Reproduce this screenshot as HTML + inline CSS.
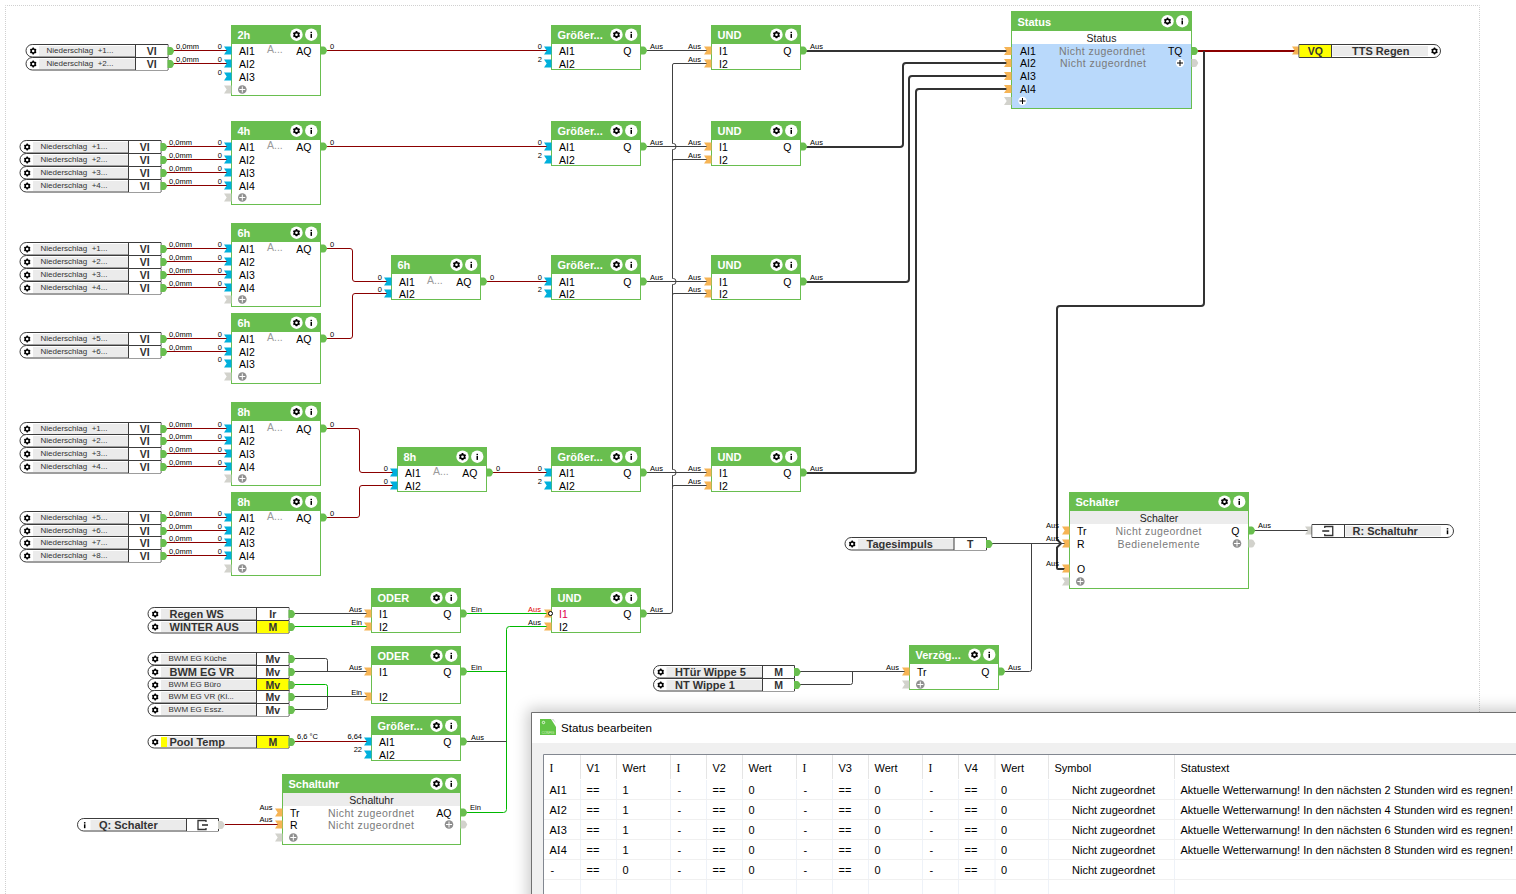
<!DOCTYPE html>
<html><head><meta charset="utf-8"><title>Loxone Config</title>
<style>
html,body{margin:0;padding:0;background:#fff;width:1516px;height:894px;overflow:hidden;position:relative}
#shadow{position:absolute;left:531px;top:712px;width:1100px;height:400px;box-shadow:0 0 14px 3px rgba(0,0,0,0.22)}
svg text{white-space:pre}
</style></head><body>
<svg width="1516" height="894" viewBox="0 0 1516 894" style="position:absolute;left:0;top:0" font-family="Liberation Sans, sans-serif">
<rect x="0" y="0" width="1516" height="894" fill="#fff"/>
<path d="M5.5,894 V5.5 H1479.5 V894" fill="none" stroke="#d0d0d0" stroke-width="1" stroke-dasharray="1,1"/>
<path d="M173,50.5 L227,50.5" fill="none" stroke="#8b0000" stroke-width="1"/>
<text x="176" y="48.5" font-size="7.5" fill="#000">0,0mm</text>
<text x="222" y="48.5" font-size="7.5" fill="#000" text-anchor="end">0</text>
<path d="M173,63.5 L227,63.5" fill="none" stroke="#8b0000" stroke-width="1"/>
<text x="176" y="61.5" font-size="7.5" fill="#000">0,0mm</text>
<text x="222" y="61.5" font-size="7.5" fill="#000" text-anchor="end">0</text>
<text x="222" y="74.5" font-size="7.5" fill="#000" text-anchor="end">0</text>
<path d="M166,146.5 L227,146.5" fill="none" stroke="#8b0000" stroke-width="1"/>
<text x="169" y="144.5" font-size="7.5" fill="#000">0,0mm</text>
<text x="222" y="144.5" font-size="7.5" fill="#000" text-anchor="end">0</text>
<path d="M166,159.5 L227,159.5" fill="none" stroke="#8b0000" stroke-width="1"/>
<text x="169" y="157.5" font-size="7.5" fill="#000">0,0mm</text>
<text x="222" y="157.5" font-size="7.5" fill="#000" text-anchor="end">0</text>
<path d="M166,172.5 L227,172.5" fill="none" stroke="#8b0000" stroke-width="1"/>
<text x="169" y="170.5" font-size="7.5" fill="#000">0,0mm</text>
<text x="222" y="170.5" font-size="7.5" fill="#000" text-anchor="end">0</text>
<path d="M166,185.5 L227,185.5" fill="none" stroke="#8b0000" stroke-width="1"/>
<text x="169" y="183.5" font-size="7.5" fill="#000">0,0mm</text>
<text x="222" y="183.5" font-size="7.5" fill="#000" text-anchor="end">0</text>
<path d="M166,248.5 L227,248.5" fill="none" stroke="#8b0000" stroke-width="1"/>
<text x="169" y="246.5" font-size="7.5" fill="#000">0,0mm</text>
<text x="222" y="246.5" font-size="7.5" fill="#000" text-anchor="end">0</text>
<path d="M166,261.5 L227,261.5" fill="none" stroke="#8b0000" stroke-width="1"/>
<text x="169" y="259.5" font-size="7.5" fill="#000">0,0mm</text>
<text x="222" y="259.5" font-size="7.5" fill="#000" text-anchor="end">0</text>
<path d="M166,274.5 L227,274.5" fill="none" stroke="#8b0000" stroke-width="1"/>
<text x="169" y="272.5" font-size="7.5" fill="#000">0,0mm</text>
<text x="222" y="272.5" font-size="7.5" fill="#000" text-anchor="end">0</text>
<path d="M166,287.5 L227,287.5" fill="none" stroke="#8b0000" stroke-width="1"/>
<text x="169" y="285.5" font-size="7.5" fill="#000">0,0mm</text>
<text x="222" y="285.5" font-size="7.5" fill="#000" text-anchor="end">0</text>
<path d="M166,338.5 L227,338.5" fill="none" stroke="#8b0000" stroke-width="1"/>
<text x="169" y="336.5" font-size="7.5" fill="#000">0,0mm</text>
<text x="222" y="336.5" font-size="7.5" fill="#000" text-anchor="end">0</text>
<path d="M166,351.5 L227,351.5" fill="none" stroke="#8b0000" stroke-width="1"/>
<text x="169" y="349.5" font-size="7.5" fill="#000">0,0mm</text>
<text x="222" y="349.5" font-size="7.5" fill="#000" text-anchor="end">0</text>
<text x="222" y="361.5" font-size="7.5" fill="#000" text-anchor="end">0</text>
<path d="M166,428.5 L227,428.5" fill="none" stroke="#8b0000" stroke-width="1"/>
<text x="169" y="426.5" font-size="7.5" fill="#000">0,0mm</text>
<text x="222" y="426.5" font-size="7.5" fill="#000" text-anchor="end">0</text>
<path d="M166,440.5 L227,440.5" fill="none" stroke="#8b0000" stroke-width="1"/>
<text x="169" y="438.5" font-size="7.5" fill="#000">0,0mm</text>
<text x="222" y="438.5" font-size="7.5" fill="#000" text-anchor="end">0</text>
<path d="M166,453.5 L227,453.5" fill="none" stroke="#8b0000" stroke-width="1"/>
<text x="169" y="451.5" font-size="7.5" fill="#000">0,0mm</text>
<text x="222" y="451.5" font-size="7.5" fill="#000" text-anchor="end">0</text>
<path d="M166,466.5 L227,466.5" fill="none" stroke="#8b0000" stroke-width="1"/>
<text x="169" y="464.5" font-size="7.5" fill="#000">0,0mm</text>
<text x="222" y="464.5" font-size="7.5" fill="#000" text-anchor="end">0</text>
<path d="M166,517.5 L227,517.5" fill="none" stroke="#8b0000" stroke-width="1"/>
<text x="169" y="515.5" font-size="7.5" fill="#000">0,0mm</text>
<text x="222" y="515.5" font-size="7.5" fill="#000" text-anchor="end">0</text>
<path d="M166,530.5 L227,530.5" fill="none" stroke="#8b0000" stroke-width="1"/>
<text x="169" y="528.5" font-size="7.5" fill="#000">0,0mm</text>
<text x="222" y="528.5" font-size="7.5" fill="#000" text-anchor="end">0</text>
<path d="M166,542.5 L227,542.5" fill="none" stroke="#8b0000" stroke-width="1"/>
<text x="169" y="540.5" font-size="7.5" fill="#000">0,0mm</text>
<text x="222" y="540.5" font-size="7.5" fill="#000" text-anchor="end">0</text>
<path d="M166,555.5 L227,555.5" fill="none" stroke="#8b0000" stroke-width="1"/>
<text x="169" y="553.5" font-size="7.5" fill="#000">0,0mm</text>
<text x="222" y="553.5" font-size="7.5" fill="#000" text-anchor="end">0</text>
<path d="M326,50.5 L547,50.5" fill="none" stroke="#8b0000" stroke-width="1"/>
<text x="330" y="48.5" font-size="7.5" fill="#000">0</text>
<text x="542" y="48.5" font-size="7.5" fill="#000" text-anchor="end">0</text>
<text x="542" y="61.5" font-size="7.5" fill="#000" text-anchor="end">2</text>
<path d="M326,146.5 L547,146.5" fill="none" stroke="#8b0000" stroke-width="1"/>
<text x="330" y="144.5" font-size="7.5" fill="#000">0</text>
<text x="542" y="144.5" font-size="7.5" fill="#000" text-anchor="end">0</text>
<text x="542" y="157.5" font-size="7.5" fill="#000" text-anchor="end">2</text>
<path d="M486,281.5 L547,281.5" fill="none" stroke="#8b0000" stroke-width="1"/>
<text x="490" y="279.5" font-size="7.5" fill="#000">0</text>
<text x="542" y="279.5" font-size="7.5" fill="#000" text-anchor="end">0</text>
<text x="542" y="291.5" font-size="7.5" fill="#000" text-anchor="end">2</text>
<path d="M492,472.5 L547,472.5" fill="none" stroke="#8b0000" stroke-width="1"/>
<text x="496" y="470.5" font-size="7.5" fill="#000">0</text>
<text x="542" y="470.5" font-size="7.5" fill="#000" text-anchor="end">0</text>
<text x="542" y="483.5" font-size="7.5" fill="#000" text-anchor="end">2</text>
<path d="M326,248.5 L350,248.5 Q352.5,248.5 352.5,251 L352.5,279 Q352.5,281.5 355,281.5 L387,281.5" fill="none" stroke="#8b0000" stroke-width="1"/>
<path d="M326,338.5 L350,338.5 Q352.5,338.5 352.5,336 L352.5,296 Q352.5,293.5 355,293.5 L387,293.5" fill="none" stroke="#8b0000" stroke-width="1"/>
<text x="330" y="246.5" font-size="7.5" fill="#000">0</text>
<text x="330" y="336.5" font-size="7.5" fill="#000">0</text>
<text x="382" y="279.5" font-size="7.5" fill="#000" text-anchor="end">0</text>
<text x="382" y="291.5" font-size="7.5" fill="#000" text-anchor="end">0</text>
<path d="M326,428.5 L357,428.5 Q359.5,428.5 359.5,431 L359.5,470 Q359.5,472.5 362,472.5 L393,472.5" fill="none" stroke="#8b0000" stroke-width="1"/>
<path d="M326,517.5 L357,517.5 Q359.5,517.5 359.5,515 L359.5,488 Q359.5,485.5 362,485.5 L393,485.5" fill="none" stroke="#8b0000" stroke-width="1"/>
<text x="330" y="426.5" font-size="7.5" fill="#000">0</text>
<text x="330" y="515.5" font-size="7.5" fill="#000">0</text>
<text x="388" y="470.5" font-size="7.5" fill="#000" text-anchor="end">0</text>
<text x="388" y="483.5" font-size="7.5" fill="#000" text-anchor="end">0</text>
<path d="M646,50.5 L707,50.5" fill="none" stroke="#404040" stroke-width="1"/>
<text x="650" y="48.5" font-size="7.5" fill="#000">Aus</text>
<text x="701" y="48.5" font-size="7.5" fill="#000" text-anchor="end">Aus</text>
<text x="701" y="61.5" font-size="7.5" fill="#000" text-anchor="end">Aus</text>
<path d="M646,146.5 L707,146.5" fill="none" stroke="#404040" stroke-width="1"/>
<text x="650" y="144.5" font-size="7.5" fill="#000">Aus</text>
<text x="701" y="144.5" font-size="7.5" fill="#000" text-anchor="end">Aus</text>
<text x="701" y="157.5" font-size="7.5" fill="#000" text-anchor="end">Aus</text>
<path d="M646,281.5 L707,281.5" fill="none" stroke="#404040" stroke-width="1"/>
<text x="650" y="279.5" font-size="7.5" fill="#000">Aus</text>
<text x="701" y="279.5" font-size="7.5" fill="#000" text-anchor="end">Aus</text>
<text x="701" y="291.5" font-size="7.5" fill="#000" text-anchor="end">Aus</text>
<path d="M646,472.5 L707,472.5" fill="none" stroke="#404040" stroke-width="1"/>
<text x="650" y="470.5" font-size="7.5" fill="#000">Aus</text>
<text x="701" y="470.5" font-size="7.5" fill="#000" text-anchor="end">Aus</text>
<text x="701" y="483.5" font-size="7.5" fill="#000" text-anchor="end">Aus</text>
<path d="M646,613.5 L670,613.5 Q672.5,613.5 672.5,611 L672.5,489.5" fill="none" stroke="#404040" stroke-width="1"/>
<path d="M672.5,66 L672.5,143.5 L673.5,143.5 Q676,143.5 676,146.5 Q676,149.5 673.5,149.5 L672.5,149.5 L672.5,278.5 L673.5,278.5 Q676,278.5 676,281.5 Q676,284.5 673.5,284.5 L672.5,284.5 L672.5,469.5 L673.5,469.5 Q676,469.5 676,472.5 Q676,475.5 673.5,475.5 L672.5,475.5 L672.5,489.5" fill="none" stroke="#404040" stroke-width="1"/>
<path d="M672.5,66.5 L672.5,65 Q672.5,63.5 674,63.5 L707,63.5" fill="none" stroke="#404040" stroke-width="1"/>
<path d="M672.5,162.5 L672.5,161 Q672.5,159.5 674,159.5 L707,159.5" fill="none" stroke="#404040" stroke-width="1"/>
<path d="M672.5,296.5 L672.5,295 Q672.5,293.5 674,293.5 L707,293.5" fill="none" stroke="#404040" stroke-width="1"/>
<path d="M672.5,488.5 L672.5,487 Q672.5,485.5 674,485.5 L707,485.5" fill="none" stroke="#404040" stroke-width="1"/>
<text x="650" y="611.5" font-size="7.5" fill="#000">Aus</text>
<path d="M806,51 L1007,51" fill="none" stroke="#333" stroke-width="2"/>
<path d="M806,147 L900,147 Q903,147 903,144 L903,66 Q903,63 906,63 L1007,63" fill="none" stroke="#333" stroke-width="2"/>
<path d="M806,282 L906,282 Q909,282 909,279 L909,79 Q909,76 912,76 L1007,76" fill="none" stroke="#333" stroke-width="2"/>
<path d="M806,473 L913,473 Q916,473 916,470 L916,92 Q916,89 919,89 L1007,89" fill="none" stroke="#333" stroke-width="2"/>
<text x="810" y="48.5" font-size="7.5" fill="#000">Aus</text>
<text x="810" y="144.5" font-size="7.5" fill="#000">Aus</text>
<text x="810" y="279.5" font-size="7.5" fill="#000">Aus</text>
<text x="810" y="470.5" font-size="7.5" fill="#000">Aus</text>
<path d="M1196,51 L1296,51" fill="none" stroke="#8b0000" stroke-width="2"/>
<path d="M1204,51 L1204,303 Q1204,306 1201,306 L1060,306 Q1057,306 1057,309 L1057,540" fill="none" stroke="#333" stroke-width="2"/>
<path d="M1057,539.5 L1061,543.5 L1057,547.5" fill="none" stroke="#333" stroke-width="2"/>
<path d="M1057,547 L1057,568 Q1057,569 1058,569 L1066,569" fill="none" stroke="#333" stroke-width="2"/>
<path d="M991,543.5 L1066,543.5" fill="none" stroke="#404040" stroke-width="1"/>
<path d="M1031.5,543.5 L1031.5,669.5 Q1031.5,671.5 1029.5,671.5 L1004,671.5" fill="none" stroke="#404040" stroke-width="1"/>
<text x="1008" y="669.5" font-size="7.5" fill="#000">Aus</text>
<text x="1059" y="528" font-size="7.5" fill="#000" text-anchor="end">Aus</text>
<text x="1059" y="541" font-size="7.5" fill="#000" text-anchor="end">Aus</text>
<text x="1059" y="566" font-size="7.5" fill="#000" text-anchor="end">Aus</text>
<path d="M1254,530.5 L1308,530.5" fill="none" stroke="#404040" stroke-width="1"/>
<text x="1258" y="528" font-size="7.5" fill="#000">Aus</text>
<path d="M800,671.5 L905,671.5" fill="none" stroke="#404040" stroke-width="1"/>
<path d="M800,684.5 L850.5,684.5 Q852.5,684.5 852.5,682.5 L852.5,671.5" fill="none" stroke="#404040" stroke-width="1"/>
<text x="899" y="669.5" font-size="7.5" fill="#000" text-anchor="end">Aus</text>
<path d="M294,613.5 L367,613.5" fill="none" stroke="#404040" stroke-width="1"/>
<path d="M294,626.5 L367,626.5" fill="none" stroke="#00b800" stroke-width="1"/>
<text x="362" y="611.5" font-size="7.5" fill="#000" text-anchor="end">Aus</text>
<text x="362" y="624.5" font-size="7.5" fill="#000" text-anchor="end">Ein</text>
<path d="M466,613.5 L547,613.5" fill="none" stroke="#00b800" stroke-width="1"/>
<text x="471" y="611.5" font-size="7.5" fill="#000">Ein</text>
<text x="541" y="611.5" font-size="7.5" fill="#e00000" text-anchor="end">Aus</text>
<text x="541" y="624.5" font-size="7.5" fill="#000" text-anchor="end">Aus</text>
<path d="M547,626.5 L509.5,626.5 Q506.5,626.5 506.5,629.5 L506.5,809.5 Q506.5,812.5 503.5,812.5 L466,812.5" fill="none" stroke="#00b800" stroke-width="1"/>
<path d="M466,671.5 L506.5,671.5" fill="none" stroke="#00b800" stroke-width="1"/>
<text x="471" y="669.5" font-size="7.5" fill="#000">Ein</text>
<path d="M466,741.5 L506.5,741.5" fill="none" stroke="#404040" stroke-width="1"/>
<text x="471" y="739.5" font-size="7.5" fill="#000">Aus</text>
<text x="470" y="810" font-size="7.5" fill="#000">Ein</text>
<path d="M294,658.5 L325.5,658.5 Q327.5,658.5 327.5,660.5 L327.5,671.5" fill="none" stroke="#404040" stroke-width="1"/>
<path d="M294,671.5 L367,671.5" fill="none" stroke="#404040" stroke-width="1"/>
<path d="M294,684.5 L325.5,684.5 Q327.5,684.5 327.5,686.5 L327.5,696.5" fill="none" stroke="#00b800" stroke-width="1"/>
<path d="M294,696.5 L367,696.5" fill="none" stroke="#404040" stroke-width="1"/>
<path d="M294,709.5 L325.5,709.5 Q327.5,709.5 327.5,707.5 L327.5,696.5" fill="none" stroke="#404040" stroke-width="1"/>
<text x="362" y="669.5" font-size="7.5" fill="#000" text-anchor="end">Aus</text>
<text x="362" y="694.5" font-size="7.5" fill="#000" text-anchor="end">Ein</text>
<path d="M294,741.5 L367,741.5" fill="none" stroke="#8b0000" stroke-width="1"/>
<text x="297" y="739" font-size="7.5" fill="#000">6,6 °C</text>
<text x="362" y="739" font-size="7.5" fill="#000" text-anchor="end">6,64</text>
<text x="362" y="752" font-size="7.5" fill="#000" text-anchor="end">22</text>
<path d="M225,824.5 L278,824.5" fill="none" stroke="#8b0000" stroke-width="1"/>
<text x="272.5" y="810" font-size="7.5" fill="#000" text-anchor="end">Aus</text>
<text x="272.5" y="822" font-size="7.5" fill="#000" text-anchor="end">Aus</text>
<rect x="231" y="25" width="90" height="71" fill="#69be4f"/>
<rect x="232" y="44" width="88" height="51" fill="#fff"/>
<text x="237.5" y="39.3" font-size="11" fill="#fff" font-weight="bold">2h</text>
<circle cx="296.5" cy="34.7" r="6.2" fill="#fff"/>
<circle cx="311.25" cy="34.7" r="6.2" fill="#fff"/>
<g transform="translate(296.5,34.7) scale(1.0)"><circle r="2.8" fill="#000"/><rect x="-0.9" y="-3.6" width="1.8" height="7.2" rx="0.4" fill="#000" transform="rotate(0)"/><rect x="-0.9" y="-3.6" width="1.8" height="7.2" rx="0.4" fill="#000" transform="rotate(60)"/><rect x="-0.9" y="-3.6" width="1.8" height="7.2" rx="0.4" fill="#000" transform="rotate(120)"/><circle r="1.3" fill="#fff"/></g>
<g transform="translate(311.25,34.7) scale(1.0)"><rect x="-0.75" y="-2.9" width="1.5" height="1.4" fill="#000"/><rect x="-0.75" y="-0.7" width="1.5" height="3.9" fill="#000"/></g>
<path d="M224,46.5 H231.5 V54.5 H224 L226.7,50.5 Z" fill="#00b0dc"/>
<text x="239" y="54.7" font-size="10.5" fill="#000">AI1</text>
<path d="M224,59.5 H231.5 V67.5 H224 L226.7,63.5 Z" fill="#00b0dc"/>
<text x="239" y="67.7" font-size="10.5" fill="#000">AI2</text>
<path d="M224,72.5 H231.5 V80.5 H224 L226.7,76.5 Z" fill="#00b0dc"/>
<text x="239" y="80.7" font-size="10.5" fill="#000">AI3</text>
<path d="M224,85.5 H231.5 V93.5 H224 L226.7,89.5 Z" fill="#d2d2cc"/>
<circle cx="242.3" cy="89.5" r="4.3" fill="#8f8f8f"/><rect x="239.3" y="89" width="6" height="1" fill="#fff"/><rect x="241.8" y="86.5" width="1" height="6" fill="#fff"/>
<text x="267" y="53" font-size="10.5" fill="#9a9a9a">A...</text>
<text x="311.5" y="54.7" font-size="10.5" fill="#000" text-anchor="end">AQ</text>
<path d="M320.5,46.5 H324 Q325.5,46.5 326.5,49 L327.3,50.5 L326.5,52 Q325.5,54.5 324,54.5 H320.5 Z" fill="#69be4f"/>
<rect x="231" y="121" width="90" height="84" fill="#69be4f"/>
<rect x="232" y="140" width="88" height="64" fill="#fff"/>
<text x="237.5" y="135.3" font-size="11" fill="#fff" font-weight="bold">4h</text>
<circle cx="296.5" cy="130.7" r="6.2" fill="#fff"/>
<circle cx="311.25" cy="130.7" r="6.2" fill="#fff"/>
<g transform="translate(296.5,130.7) scale(1.0)"><circle r="2.8" fill="#000"/><rect x="-0.9" y="-3.6" width="1.8" height="7.2" rx="0.4" fill="#000" transform="rotate(0)"/><rect x="-0.9" y="-3.6" width="1.8" height="7.2" rx="0.4" fill="#000" transform="rotate(60)"/><rect x="-0.9" y="-3.6" width="1.8" height="7.2" rx="0.4" fill="#000" transform="rotate(120)"/><circle r="1.3" fill="#fff"/></g>
<g transform="translate(311.25,130.7) scale(1.0)"><rect x="-0.75" y="-2.9" width="1.5" height="1.4" fill="#000"/><rect x="-0.75" y="-0.7" width="1.5" height="3.9" fill="#000"/></g>
<path d="M224,142.5 H231.5 V150.5 H224 L226.7,146.5 Z" fill="#00b0dc"/>
<text x="239" y="150.7" font-size="10.5" fill="#000">AI1</text>
<path d="M224,155.5 H231.5 V163.5 H224 L226.7,159.5 Z" fill="#00b0dc"/>
<text x="239" y="163.7" font-size="10.5" fill="#000">AI2</text>
<path d="M224,168.5 H231.5 V176.5 H224 L226.7,172.5 Z" fill="#00b0dc"/>
<text x="239" y="176.7" font-size="10.5" fill="#000">AI3</text>
<path d="M224,181.5 H231.5 V189.5 H224 L226.7,185.5 Z" fill="#00b0dc"/>
<text x="239" y="189.7" font-size="10.5" fill="#000">AI4</text>
<path d="M224,193.5 H231.5 V201.5 H224 L226.7,197.5 Z" fill="#d2d2cc"/>
<circle cx="242.3" cy="197.5" r="4.3" fill="#8f8f8f"/><rect x="239.3" y="197" width="6" height="1" fill="#fff"/><rect x="241.8" y="194.5" width="1" height="6" fill="#fff"/>
<text x="267" y="149" font-size="10.5" fill="#9a9a9a">A...</text>
<text x="311.5" y="150.7" font-size="10.5" fill="#000" text-anchor="end">AQ</text>
<path d="M320.5,142.5 H324 Q325.5,142.5 326.5,145 L327.3,146.5 L326.5,148 Q325.5,150.5 324,150.5 H320.5 Z" fill="#69be4f"/>
<rect x="231" y="223" width="90" height="84" fill="#69be4f"/>
<rect x="232" y="242" width="88" height="64" fill="#fff"/>
<text x="237.5" y="237.3" font-size="11" fill="#fff" font-weight="bold">6h</text>
<circle cx="296.5" cy="232.7" r="6.2" fill="#fff"/>
<circle cx="311.25" cy="232.7" r="6.2" fill="#fff"/>
<g transform="translate(296.5,232.7) scale(1.0)"><circle r="2.8" fill="#000"/><rect x="-0.9" y="-3.6" width="1.8" height="7.2" rx="0.4" fill="#000" transform="rotate(0)"/><rect x="-0.9" y="-3.6" width="1.8" height="7.2" rx="0.4" fill="#000" transform="rotate(60)"/><rect x="-0.9" y="-3.6" width="1.8" height="7.2" rx="0.4" fill="#000" transform="rotate(120)"/><circle r="1.3" fill="#fff"/></g>
<g transform="translate(311.25,232.7) scale(1.0)"><rect x="-0.75" y="-2.9" width="1.5" height="1.4" fill="#000"/><rect x="-0.75" y="-0.7" width="1.5" height="3.9" fill="#000"/></g>
<path d="M224,244.5 H231.5 V252.5 H224 L226.7,248.5 Z" fill="#00b0dc"/>
<text x="239" y="252.7" font-size="10.5" fill="#000">AI1</text>
<path d="M224,257.5 H231.5 V265.5 H224 L226.7,261.5 Z" fill="#00b0dc"/>
<text x="239" y="265.7" font-size="10.5" fill="#000">AI2</text>
<path d="M224,270.5 H231.5 V278.5 H224 L226.7,274.5 Z" fill="#00b0dc"/>
<text x="239" y="278.7" font-size="10.5" fill="#000">AI3</text>
<path d="M224,283.5 H231.5 V291.5 H224 L226.7,287.5 Z" fill="#00b0dc"/>
<text x="239" y="291.7" font-size="10.5" fill="#000">AI4</text>
<path d="M224,295.5 H231.5 V303.5 H224 L226.7,299.5 Z" fill="#d2d2cc"/>
<circle cx="242.3" cy="299.5" r="4.3" fill="#8f8f8f"/><rect x="239.3" y="299" width="6" height="1" fill="#fff"/><rect x="241.8" y="296.5" width="1" height="6" fill="#fff"/>
<text x="267" y="251" font-size="10.5" fill="#9a9a9a">A...</text>
<text x="311.5" y="252.7" font-size="10.5" fill="#000" text-anchor="end">AQ</text>
<path d="M320.5,244.5 H324 Q325.5,244.5 326.5,247 L327.3,248.5 L326.5,250 Q325.5,252.5 324,252.5 H320.5 Z" fill="#69be4f"/>
<rect x="231" y="313" width="90" height="71" fill="#69be4f"/>
<rect x="232" y="332" width="88" height="51" fill="#fff"/>
<text x="237.5" y="327.3" font-size="11" fill="#fff" font-weight="bold">6h</text>
<circle cx="296.5" cy="322.7" r="6.2" fill="#fff"/>
<circle cx="311.25" cy="322.7" r="6.2" fill="#fff"/>
<g transform="translate(296.5,322.7) scale(1.0)"><circle r="2.8" fill="#000"/><rect x="-0.9" y="-3.6" width="1.8" height="7.2" rx="0.4" fill="#000" transform="rotate(0)"/><rect x="-0.9" y="-3.6" width="1.8" height="7.2" rx="0.4" fill="#000" transform="rotate(60)"/><rect x="-0.9" y="-3.6" width="1.8" height="7.2" rx="0.4" fill="#000" transform="rotate(120)"/><circle r="1.3" fill="#fff"/></g>
<g transform="translate(311.25,322.7) scale(1.0)"><rect x="-0.75" y="-2.9" width="1.5" height="1.4" fill="#000"/><rect x="-0.75" y="-0.7" width="1.5" height="3.9" fill="#000"/></g>
<path d="M224,334.5 H231.5 V342.5 H224 L226.7,338.5 Z" fill="#00b0dc"/>
<text x="239" y="342.7" font-size="10.5" fill="#000">AI1</text>
<path d="M224,347.5 H231.5 V355.5 H224 L226.7,351.5 Z" fill="#00b0dc"/>
<text x="239" y="355.7" font-size="10.5" fill="#000">AI2</text>
<path d="M224,359.5 H231.5 V367.5 H224 L226.7,363.5 Z" fill="#00b0dc"/>
<text x="239" y="367.7" font-size="10.5" fill="#000">AI3</text>
<path d="M224,372.5 H231.5 V380.5 H224 L226.7,376.5 Z" fill="#d2d2cc"/>
<circle cx="242.3" cy="376.5" r="4.3" fill="#8f8f8f"/><rect x="239.3" y="376" width="6" height="1" fill="#fff"/><rect x="241.8" y="373.5" width="1" height="6" fill="#fff"/>
<text x="267" y="341" font-size="10.5" fill="#9a9a9a">A...</text>
<text x="311.5" y="342.7" font-size="10.5" fill="#000" text-anchor="end">AQ</text>
<path d="M320.5,334.5 H324 Q325.5,334.5 326.5,337 L327.3,338.5 L326.5,340 Q325.5,342.5 324,342.5 H320.5 Z" fill="#69be4f"/>
<rect x="231" y="402" width="90" height="84" fill="#69be4f"/>
<rect x="232" y="421" width="88" height="64" fill="#fff"/>
<text x="237.5" y="416.3" font-size="11" fill="#fff" font-weight="bold">8h</text>
<circle cx="296.5" cy="411.7" r="6.2" fill="#fff"/>
<circle cx="311.25" cy="411.7" r="6.2" fill="#fff"/>
<g transform="translate(296.5,411.7) scale(1.0)"><circle r="2.8" fill="#000"/><rect x="-0.9" y="-3.6" width="1.8" height="7.2" rx="0.4" fill="#000" transform="rotate(0)"/><rect x="-0.9" y="-3.6" width="1.8" height="7.2" rx="0.4" fill="#000" transform="rotate(60)"/><rect x="-0.9" y="-3.6" width="1.8" height="7.2" rx="0.4" fill="#000" transform="rotate(120)"/><circle r="1.3" fill="#fff"/></g>
<g transform="translate(311.25,411.7) scale(1.0)"><rect x="-0.75" y="-2.9" width="1.5" height="1.4" fill="#000"/><rect x="-0.75" y="-0.7" width="1.5" height="3.9" fill="#000"/></g>
<path d="M224,424.5 H231.5 V432.5 H224 L226.7,428.5 Z" fill="#00b0dc"/>
<text x="239" y="432.7" font-size="10.5" fill="#000">AI1</text>
<path d="M224,436.5 H231.5 V444.5 H224 L226.7,440.5 Z" fill="#00b0dc"/>
<text x="239" y="444.7" font-size="10.5" fill="#000">AI2</text>
<path d="M224,449.5 H231.5 V457.5 H224 L226.7,453.5 Z" fill="#00b0dc"/>
<text x="239" y="457.7" font-size="10.5" fill="#000">AI3</text>
<path d="M224,462.5 H231.5 V470.5 H224 L226.7,466.5 Z" fill="#00b0dc"/>
<text x="239" y="470.7" font-size="10.5" fill="#000">AI4</text>
<path d="M224,474.5 H231.5 V482.5 H224 L226.7,478.5 Z" fill="#d2d2cc"/>
<circle cx="242.3" cy="478.5" r="4.3" fill="#8f8f8f"/><rect x="239.3" y="478" width="6" height="1" fill="#fff"/><rect x="241.8" y="475.5" width="1" height="6" fill="#fff"/>
<text x="267" y="431" font-size="10.5" fill="#9a9a9a">A...</text>
<text x="311.5" y="432.7" font-size="10.5" fill="#000" text-anchor="end">AQ</text>
<path d="M320.5,424.5 H324 Q325.5,424.5 326.5,427 L327.3,428.5 L326.5,430 Q325.5,432.5 324,432.5 H320.5 Z" fill="#69be4f"/>
<rect x="231" y="492" width="90" height="84" fill="#69be4f"/>
<rect x="232" y="511" width="88" height="64" fill="#fff"/>
<text x="237.5" y="506.3" font-size="11" fill="#fff" font-weight="bold">8h</text>
<circle cx="296.5" cy="501.7" r="6.2" fill="#fff"/>
<circle cx="311.25" cy="501.7" r="6.2" fill="#fff"/>
<g transform="translate(296.5,501.7) scale(1.0)"><circle r="2.8" fill="#000"/><rect x="-0.9" y="-3.6" width="1.8" height="7.2" rx="0.4" fill="#000" transform="rotate(0)"/><rect x="-0.9" y="-3.6" width="1.8" height="7.2" rx="0.4" fill="#000" transform="rotate(60)"/><rect x="-0.9" y="-3.6" width="1.8" height="7.2" rx="0.4" fill="#000" transform="rotate(120)"/><circle r="1.3" fill="#fff"/></g>
<g transform="translate(311.25,501.7) scale(1.0)"><rect x="-0.75" y="-2.9" width="1.5" height="1.4" fill="#000"/><rect x="-0.75" y="-0.7" width="1.5" height="3.9" fill="#000"/></g>
<path d="M224,513.5 H231.5 V521.5 H224 L226.7,517.5 Z" fill="#00b0dc"/>
<text x="239" y="521.7" font-size="10.5" fill="#000">AI1</text>
<path d="M224,526.5 H231.5 V534.5 H224 L226.7,530.5 Z" fill="#00b0dc"/>
<text x="239" y="534.7" font-size="10.5" fill="#000">AI2</text>
<path d="M224,538.5 H231.5 V546.5 H224 L226.7,542.5 Z" fill="#00b0dc"/>
<text x="239" y="546.7" font-size="10.5" fill="#000">AI3</text>
<path d="M224,551.5 H231.5 V559.5 H224 L226.7,555.5 Z" fill="#00b0dc"/>
<text x="239" y="559.7" font-size="10.5" fill="#000">AI4</text>
<path d="M224,564.5 H231.5 V572.5 H224 L226.7,568.5 Z" fill="#d2d2cc"/>
<circle cx="242.3" cy="568.5" r="4.3" fill="#8f8f8f"/><rect x="239.3" y="568" width="6" height="1" fill="#fff"/><rect x="241.8" y="565.5" width="1" height="6" fill="#fff"/>
<text x="267" y="520" font-size="10.5" fill="#9a9a9a">A...</text>
<text x="311.5" y="521.7" font-size="10.5" fill="#000" text-anchor="end">AQ</text>
<path d="M320.5,513.5 H324 Q325.5,513.5 326.5,516 L327.3,517.5 L326.5,519 Q325.5,521.5 324,521.5 H320.5 Z" fill="#69be4f"/>
<rect x="391" y="255" width="90" height="45" fill="#69be4f"/>
<rect x="392" y="274" width="88" height="25" fill="#fff"/>
<text x="397.5" y="269.3" font-size="11" fill="#fff" font-weight="bold">6h</text>
<circle cx="456.5" cy="264.7" r="6.2" fill="#fff"/>
<circle cx="471.25" cy="264.7" r="6.2" fill="#fff"/>
<g transform="translate(456.5,264.7) scale(1.0)"><circle r="2.8" fill="#000"/><rect x="-0.9" y="-3.6" width="1.8" height="7.2" rx="0.4" fill="#000" transform="rotate(0)"/><rect x="-0.9" y="-3.6" width="1.8" height="7.2" rx="0.4" fill="#000" transform="rotate(60)"/><rect x="-0.9" y="-3.6" width="1.8" height="7.2" rx="0.4" fill="#000" transform="rotate(120)"/><circle r="1.3" fill="#fff"/></g>
<g transform="translate(471.25,264.7) scale(1.0)"><rect x="-0.75" y="-2.9" width="1.5" height="1.4" fill="#000"/><rect x="-0.75" y="-0.7" width="1.5" height="3.9" fill="#000"/></g>
<path d="M384,277.5 H391.5 V285.5 H384 L386.7,281.5 Z" fill="#00b0dc"/>
<text x="399" y="285.7" font-size="10.5" fill="#000">AI1</text>
<path d="M384,289.5 H391.5 V297.5 H384 L386.7,293.5 Z" fill="#00b0dc"/>
<text x="399" y="297.7" font-size="10.5" fill="#000">AI2</text>
<text x="427" y="284" font-size="10.5" fill="#9a9a9a">A...</text>
<text x="471.5" y="285.7" font-size="10.5" fill="#000" text-anchor="end">AQ</text>
<path d="M480.5,277.5 H484 Q485.5,277.5 486.5,280 L487.3,281.5 L486.5,283 Q485.5,285.5 484,285.5 H480.5 Z" fill="#69be4f"/>
<rect x="397" y="447" width="90" height="45" fill="#69be4f"/>
<rect x="398" y="466" width="88" height="25" fill="#fff"/>
<text x="403.5" y="461.3" font-size="11" fill="#fff" font-weight="bold">8h</text>
<circle cx="462.5" cy="456.7" r="6.2" fill="#fff"/>
<circle cx="477.25" cy="456.7" r="6.2" fill="#fff"/>
<g transform="translate(462.5,456.7) scale(1.0)"><circle r="2.8" fill="#000"/><rect x="-0.9" y="-3.6" width="1.8" height="7.2" rx="0.4" fill="#000" transform="rotate(0)"/><rect x="-0.9" y="-3.6" width="1.8" height="7.2" rx="0.4" fill="#000" transform="rotate(60)"/><rect x="-0.9" y="-3.6" width="1.8" height="7.2" rx="0.4" fill="#000" transform="rotate(120)"/><circle r="1.3" fill="#fff"/></g>
<g transform="translate(477.25,456.7) scale(1.0)"><rect x="-0.75" y="-2.9" width="1.5" height="1.4" fill="#000"/><rect x="-0.75" y="-0.7" width="1.5" height="3.9" fill="#000"/></g>
<path d="M390,468.5 H397.5 V476.5 H390 L392.7,472.5 Z" fill="#00b0dc"/>
<text x="405" y="476.7" font-size="10.5" fill="#000">AI1</text>
<path d="M390,481.5 H397.5 V489.5 H390 L392.7,485.5 Z" fill="#00b0dc"/>
<text x="405" y="489.7" font-size="10.5" fill="#000">AI2</text>
<text x="433" y="475" font-size="10.5" fill="#9a9a9a">A...</text>
<text x="477.5" y="476.7" font-size="10.5" fill="#000" text-anchor="end">AQ</text>
<path d="M486.5,468.5 H490 Q491.5,468.5 492.5,471 L493.3,472.5 L492.5,474 Q491.5,476.5 490,476.5 H486.5 Z" fill="#69be4f"/>
<rect x="551" y="25" width="90" height="45" fill="#69be4f"/>
<rect x="552" y="44" width="88" height="25" fill="#fff"/>
<text x="557.5" y="39.3" font-size="11" fill="#fff" font-weight="bold">Größer...</text>
<circle cx="616.5" cy="34.7" r="6.2" fill="#fff"/>
<circle cx="631.25" cy="34.7" r="6.2" fill="#fff"/>
<g transform="translate(616.5,34.7) scale(1.0)"><circle r="2.8" fill="#000"/><rect x="-0.9" y="-3.6" width="1.8" height="7.2" rx="0.4" fill="#000" transform="rotate(0)"/><rect x="-0.9" y="-3.6" width="1.8" height="7.2" rx="0.4" fill="#000" transform="rotate(60)"/><rect x="-0.9" y="-3.6" width="1.8" height="7.2" rx="0.4" fill="#000" transform="rotate(120)"/><circle r="1.3" fill="#fff"/></g>
<g transform="translate(631.25,34.7) scale(1.0)"><rect x="-0.75" y="-2.9" width="1.5" height="1.4" fill="#000"/><rect x="-0.75" y="-0.7" width="1.5" height="3.9" fill="#000"/></g>
<path d="M544,46.5 H551.5 V54.5 H544 L546.7,50.5 Z" fill="#00b0dc"/>
<text x="559" y="54.7" font-size="10.5" fill="#000">AI1</text>
<path d="M544,59.5 H551.5 V67.5 H544 L546.7,63.5 Z" fill="#00b0dc"/>
<text x="559" y="67.7" font-size="10.5" fill="#000">AI2</text>
<text x="631.5" y="54.7" font-size="10.5" fill="#000" text-anchor="end">Q</text>
<path d="M640.5,46.5 H644 Q645.5,46.5 646.5,49 L647.3,50.5 L646.5,52 Q645.5,54.5 644,54.5 H640.5 Z" fill="#69be4f"/>
<rect x="551" y="121" width="90" height="45" fill="#69be4f"/>
<rect x="552" y="140" width="88" height="25" fill="#fff"/>
<text x="557.5" y="135.3" font-size="11" fill="#fff" font-weight="bold">Größer...</text>
<circle cx="616.5" cy="130.7" r="6.2" fill="#fff"/>
<circle cx="631.25" cy="130.7" r="6.2" fill="#fff"/>
<g transform="translate(616.5,130.7) scale(1.0)"><circle r="2.8" fill="#000"/><rect x="-0.9" y="-3.6" width="1.8" height="7.2" rx="0.4" fill="#000" transform="rotate(0)"/><rect x="-0.9" y="-3.6" width="1.8" height="7.2" rx="0.4" fill="#000" transform="rotate(60)"/><rect x="-0.9" y="-3.6" width="1.8" height="7.2" rx="0.4" fill="#000" transform="rotate(120)"/><circle r="1.3" fill="#fff"/></g>
<g transform="translate(631.25,130.7) scale(1.0)"><rect x="-0.75" y="-2.9" width="1.5" height="1.4" fill="#000"/><rect x="-0.75" y="-0.7" width="1.5" height="3.9" fill="#000"/></g>
<path d="M544,142.5 H551.5 V150.5 H544 L546.7,146.5 Z" fill="#00b0dc"/>
<text x="559" y="150.7" font-size="10.5" fill="#000">AI1</text>
<path d="M544,155.5 H551.5 V163.5 H544 L546.7,159.5 Z" fill="#00b0dc"/>
<text x="559" y="163.7" font-size="10.5" fill="#000">AI2</text>
<text x="631.5" y="150.7" font-size="10.5" fill="#000" text-anchor="end">Q</text>
<path d="M640.5,142.5 H644 Q645.5,142.5 646.5,145 L647.3,146.5 L646.5,148 Q645.5,150.5 644,150.5 H640.5 Z" fill="#69be4f"/>
<rect x="551" y="255" width="90" height="45" fill="#69be4f"/>
<rect x="552" y="274" width="88" height="25" fill="#fff"/>
<text x="557.5" y="269.3" font-size="11" fill="#fff" font-weight="bold">Größer...</text>
<circle cx="616.5" cy="264.7" r="6.2" fill="#fff"/>
<circle cx="631.25" cy="264.7" r="6.2" fill="#fff"/>
<g transform="translate(616.5,264.7) scale(1.0)"><circle r="2.8" fill="#000"/><rect x="-0.9" y="-3.6" width="1.8" height="7.2" rx="0.4" fill="#000" transform="rotate(0)"/><rect x="-0.9" y="-3.6" width="1.8" height="7.2" rx="0.4" fill="#000" transform="rotate(60)"/><rect x="-0.9" y="-3.6" width="1.8" height="7.2" rx="0.4" fill="#000" transform="rotate(120)"/><circle r="1.3" fill="#fff"/></g>
<g transform="translate(631.25,264.7) scale(1.0)"><rect x="-0.75" y="-2.9" width="1.5" height="1.4" fill="#000"/><rect x="-0.75" y="-0.7" width="1.5" height="3.9" fill="#000"/></g>
<path d="M544,277.5 H551.5 V285.5 H544 L546.7,281.5 Z" fill="#00b0dc"/>
<text x="559" y="285.7" font-size="10.5" fill="#000">AI1</text>
<path d="M544,289.5 H551.5 V297.5 H544 L546.7,293.5 Z" fill="#00b0dc"/>
<text x="559" y="297.7" font-size="10.5" fill="#000">AI2</text>
<text x="631.5" y="285.7" font-size="10.5" fill="#000" text-anchor="end">Q</text>
<path d="M640.5,277.5 H644 Q645.5,277.5 646.5,280 L647.3,281.5 L646.5,283 Q645.5,285.5 644,285.5 H640.5 Z" fill="#69be4f"/>
<rect x="551" y="447" width="90" height="45" fill="#69be4f"/>
<rect x="552" y="466" width="88" height="25" fill="#fff"/>
<text x="557.5" y="461.3" font-size="11" fill="#fff" font-weight="bold">Größer...</text>
<circle cx="616.5" cy="456.7" r="6.2" fill="#fff"/>
<circle cx="631.25" cy="456.7" r="6.2" fill="#fff"/>
<g transform="translate(616.5,456.7) scale(1.0)"><circle r="2.8" fill="#000"/><rect x="-0.9" y="-3.6" width="1.8" height="7.2" rx="0.4" fill="#000" transform="rotate(0)"/><rect x="-0.9" y="-3.6" width="1.8" height="7.2" rx="0.4" fill="#000" transform="rotate(60)"/><rect x="-0.9" y="-3.6" width="1.8" height="7.2" rx="0.4" fill="#000" transform="rotate(120)"/><circle r="1.3" fill="#fff"/></g>
<g transform="translate(631.25,456.7) scale(1.0)"><rect x="-0.75" y="-2.9" width="1.5" height="1.4" fill="#000"/><rect x="-0.75" y="-0.7" width="1.5" height="3.9" fill="#000"/></g>
<path d="M544,468.5 H551.5 V476.5 H544 L546.7,472.5 Z" fill="#00b0dc"/>
<text x="559" y="476.7" font-size="10.5" fill="#000">AI1</text>
<path d="M544,481.5 H551.5 V489.5 H544 L546.7,485.5 Z" fill="#00b0dc"/>
<text x="559" y="489.7" font-size="10.5" fill="#000">AI2</text>
<text x="631.5" y="476.7" font-size="10.5" fill="#000" text-anchor="end">Q</text>
<path d="M640.5,468.5 H644 Q645.5,468.5 646.5,471 L647.3,472.5 L646.5,474 Q645.5,476.5 644,476.5 H640.5 Z" fill="#69be4f"/>
<rect x="711" y="25" width="90" height="45" fill="#69be4f"/>
<rect x="712" y="44" width="88" height="25" fill="#fff"/>
<text x="717.5" y="39.3" font-size="11" fill="#fff" font-weight="bold">UND</text>
<circle cx="776.5" cy="34.7" r="6.2" fill="#fff"/>
<circle cx="791.25" cy="34.7" r="6.2" fill="#fff"/>
<g transform="translate(776.5,34.7) scale(1.0)"><circle r="2.8" fill="#000"/><rect x="-0.9" y="-3.6" width="1.8" height="7.2" rx="0.4" fill="#000" transform="rotate(0)"/><rect x="-0.9" y="-3.6" width="1.8" height="7.2" rx="0.4" fill="#000" transform="rotate(60)"/><rect x="-0.9" y="-3.6" width="1.8" height="7.2" rx="0.4" fill="#000" transform="rotate(120)"/><circle r="1.3" fill="#fff"/></g>
<g transform="translate(791.25,34.7) scale(1.0)"><rect x="-0.75" y="-2.9" width="1.5" height="1.4" fill="#000"/><rect x="-0.75" y="-0.7" width="1.5" height="3.9" fill="#000"/></g>
<path d="M704,46.5 H711.5 V54.5 H704 L706.7,50.5 Z" fill="#f6b455"/>
<text x="719" y="54.7" font-size="10.5" fill="#000">I1</text>
<path d="M704,59.5 H711.5 V67.5 H704 L706.7,63.5 Z" fill="#f6b455"/>
<text x="719" y="67.7" font-size="10.5" fill="#000">I2</text>
<text x="791.5" y="54.7" font-size="10.5" fill="#000" text-anchor="end">Q</text>
<path d="M800.5,46.5 H804 Q805.5,46.5 806.5,49 L807.3,50.5 L806.5,52 Q805.5,54.5 804,54.5 H800.5 Z" fill="#69be4f"/>
<rect x="711" y="121" width="90" height="45" fill="#69be4f"/>
<rect x="712" y="140" width="88" height="25" fill="#fff"/>
<text x="717.5" y="135.3" font-size="11" fill="#fff" font-weight="bold">UND</text>
<circle cx="776.5" cy="130.7" r="6.2" fill="#fff"/>
<circle cx="791.25" cy="130.7" r="6.2" fill="#fff"/>
<g transform="translate(776.5,130.7) scale(1.0)"><circle r="2.8" fill="#000"/><rect x="-0.9" y="-3.6" width="1.8" height="7.2" rx="0.4" fill="#000" transform="rotate(0)"/><rect x="-0.9" y="-3.6" width="1.8" height="7.2" rx="0.4" fill="#000" transform="rotate(60)"/><rect x="-0.9" y="-3.6" width="1.8" height="7.2" rx="0.4" fill="#000" transform="rotate(120)"/><circle r="1.3" fill="#fff"/></g>
<g transform="translate(791.25,130.7) scale(1.0)"><rect x="-0.75" y="-2.9" width="1.5" height="1.4" fill="#000"/><rect x="-0.75" y="-0.7" width="1.5" height="3.9" fill="#000"/></g>
<path d="M704,142.5 H711.5 V150.5 H704 L706.7,146.5 Z" fill="#f6b455"/>
<text x="719" y="150.7" font-size="10.5" fill="#000">I1</text>
<path d="M704,155.5 H711.5 V163.5 H704 L706.7,159.5 Z" fill="#f6b455"/>
<text x="719" y="163.7" font-size="10.5" fill="#000">I2</text>
<text x="791.5" y="150.7" font-size="10.5" fill="#000" text-anchor="end">Q</text>
<path d="M800.5,142.5 H804 Q805.5,142.5 806.5,145 L807.3,146.5 L806.5,148 Q805.5,150.5 804,150.5 H800.5 Z" fill="#69be4f"/>
<rect x="711" y="255" width="90" height="45" fill="#69be4f"/>
<rect x="712" y="274" width="88" height="25" fill="#fff"/>
<text x="717.5" y="269.3" font-size="11" fill="#fff" font-weight="bold">UND</text>
<circle cx="776.5" cy="264.7" r="6.2" fill="#fff"/>
<circle cx="791.25" cy="264.7" r="6.2" fill="#fff"/>
<g transform="translate(776.5,264.7) scale(1.0)"><circle r="2.8" fill="#000"/><rect x="-0.9" y="-3.6" width="1.8" height="7.2" rx="0.4" fill="#000" transform="rotate(0)"/><rect x="-0.9" y="-3.6" width="1.8" height="7.2" rx="0.4" fill="#000" transform="rotate(60)"/><rect x="-0.9" y="-3.6" width="1.8" height="7.2" rx="0.4" fill="#000" transform="rotate(120)"/><circle r="1.3" fill="#fff"/></g>
<g transform="translate(791.25,264.7) scale(1.0)"><rect x="-0.75" y="-2.9" width="1.5" height="1.4" fill="#000"/><rect x="-0.75" y="-0.7" width="1.5" height="3.9" fill="#000"/></g>
<path d="M704,277.5 H711.5 V285.5 H704 L706.7,281.5 Z" fill="#f6b455"/>
<text x="719" y="285.7" font-size="10.5" fill="#000">I1</text>
<path d="M704,289.5 H711.5 V297.5 H704 L706.7,293.5 Z" fill="#f6b455"/>
<text x="719" y="297.7" font-size="10.5" fill="#000">I2</text>
<text x="791.5" y="285.7" font-size="10.5" fill="#000" text-anchor="end">Q</text>
<path d="M800.5,277.5 H804 Q805.5,277.5 806.5,280 L807.3,281.5 L806.5,283 Q805.5,285.5 804,285.5 H800.5 Z" fill="#69be4f"/>
<rect x="711" y="447" width="90" height="45" fill="#69be4f"/>
<rect x="712" y="466" width="88" height="25" fill="#fff"/>
<text x="717.5" y="461.3" font-size="11" fill="#fff" font-weight="bold">UND</text>
<circle cx="776.5" cy="456.7" r="6.2" fill="#fff"/>
<circle cx="791.25" cy="456.7" r="6.2" fill="#fff"/>
<g transform="translate(776.5,456.7) scale(1.0)"><circle r="2.8" fill="#000"/><rect x="-0.9" y="-3.6" width="1.8" height="7.2" rx="0.4" fill="#000" transform="rotate(0)"/><rect x="-0.9" y="-3.6" width="1.8" height="7.2" rx="0.4" fill="#000" transform="rotate(60)"/><rect x="-0.9" y="-3.6" width="1.8" height="7.2" rx="0.4" fill="#000" transform="rotate(120)"/><circle r="1.3" fill="#fff"/></g>
<g transform="translate(791.25,456.7) scale(1.0)"><rect x="-0.75" y="-2.9" width="1.5" height="1.4" fill="#000"/><rect x="-0.75" y="-0.7" width="1.5" height="3.9" fill="#000"/></g>
<path d="M704,468.5 H711.5 V476.5 H704 L706.7,472.5 Z" fill="#f6b455"/>
<text x="719" y="476.7" font-size="10.5" fill="#000">I1</text>
<path d="M704,481.5 H711.5 V489.5 H704 L706.7,485.5 Z" fill="#f6b455"/>
<text x="719" y="489.7" font-size="10.5" fill="#000">I2</text>
<text x="791.5" y="476.7" font-size="10.5" fill="#000" text-anchor="end">Q</text>
<path d="M800.5,468.5 H804 Q805.5,468.5 806.5,471 L807.3,472.5 L806.5,474 Q805.5,476.5 804,476.5 H800.5 Z" fill="#69be4f"/>
<rect x="371" y="588" width="90" height="45" fill="#69be4f"/>
<rect x="372" y="607" width="88" height="25" fill="#fff"/>
<text x="377.5" y="602.3" font-size="11" fill="#fff" font-weight="bold">ODER</text>
<circle cx="436.5" cy="597.7" r="6.2" fill="#fff"/>
<circle cx="451.25" cy="597.7" r="6.2" fill="#fff"/>
<g transform="translate(436.5,597.7) scale(1.0)"><circle r="2.8" fill="#000"/><rect x="-0.9" y="-3.6" width="1.8" height="7.2" rx="0.4" fill="#000" transform="rotate(0)"/><rect x="-0.9" y="-3.6" width="1.8" height="7.2" rx="0.4" fill="#000" transform="rotate(60)"/><rect x="-0.9" y="-3.6" width="1.8" height="7.2" rx="0.4" fill="#000" transform="rotate(120)"/><circle r="1.3" fill="#fff"/></g>
<g transform="translate(451.25,597.7) scale(1.0)"><rect x="-0.75" y="-2.9" width="1.5" height="1.4" fill="#000"/><rect x="-0.75" y="-0.7" width="1.5" height="3.9" fill="#000"/></g>
<path d="M364,609.5 H371.5 V617.5 H364 L366.7,613.5 Z" fill="#f6b455"/>
<text x="379" y="617.7" font-size="10.5" fill="#000">I1</text>
<path d="M364,622.5 H371.5 V630.5 H364 L366.7,626.5 Z" fill="#f6b455"/>
<text x="379" y="630.7" font-size="10.5" fill="#000">I2</text>
<text x="451.5" y="617.7" font-size="10.5" fill="#000" text-anchor="end">Q</text>
<path d="M460.5,609.5 H464 Q465.5,609.5 466.5,612 L467.3,613.5 L466.5,615 Q465.5,617.5 464,617.5 H460.5 Z" fill="#69be4f"/>
<rect x="371" y="646" width="90" height="58" fill="#69be4f"/>
<rect x="372" y="665" width="88" height="38" fill="#fff"/>
<text x="377.5" y="660.3" font-size="11" fill="#fff" font-weight="bold">ODER</text>
<circle cx="436.5" cy="655.7" r="6.2" fill="#fff"/>
<circle cx="451.25" cy="655.7" r="6.2" fill="#fff"/>
<g transform="translate(436.5,655.7) scale(1.0)"><circle r="2.8" fill="#000"/><rect x="-0.9" y="-3.6" width="1.8" height="7.2" rx="0.4" fill="#000" transform="rotate(0)"/><rect x="-0.9" y="-3.6" width="1.8" height="7.2" rx="0.4" fill="#000" transform="rotate(60)"/><rect x="-0.9" y="-3.6" width="1.8" height="7.2" rx="0.4" fill="#000" transform="rotate(120)"/><circle r="1.3" fill="#fff"/></g>
<g transform="translate(451.25,655.7) scale(1.0)"><rect x="-0.75" y="-2.9" width="1.5" height="1.4" fill="#000"/><rect x="-0.75" y="-0.7" width="1.5" height="3.9" fill="#000"/></g>
<path d="M364,667.5 H371.5 V675.5 H364 L366.7,671.5 Z" fill="#f6b455"/>
<text x="379" y="675.7" font-size="10.5" fill="#000">I1</text>
<path d="M364,692.5 H371.5 V700.5 H364 L366.7,696.5 Z" fill="#f6b455"/>
<text x="379" y="700.7" font-size="10.5" fill="#000">I2</text>
<text x="451.5" y="675.7" font-size="10.5" fill="#000" text-anchor="end">Q</text>
<path d="M460.5,667.5 H464 Q465.5,667.5 466.5,670 L467.3,671.5 L466.5,673 Q465.5,675.5 464,675.5 H460.5 Z" fill="#69be4f"/>
<rect x="371" y="716" width="90" height="45" fill="#69be4f"/>
<rect x="372" y="735" width="88" height="25" fill="#fff"/>
<text x="377.5" y="730.3" font-size="11" fill="#fff" font-weight="bold">Größer...</text>
<circle cx="436.5" cy="725.7" r="6.2" fill="#fff"/>
<circle cx="451.25" cy="725.7" r="6.2" fill="#fff"/>
<g transform="translate(436.5,725.7) scale(1.0)"><circle r="2.8" fill="#000"/><rect x="-0.9" y="-3.6" width="1.8" height="7.2" rx="0.4" fill="#000" transform="rotate(0)"/><rect x="-0.9" y="-3.6" width="1.8" height="7.2" rx="0.4" fill="#000" transform="rotate(60)"/><rect x="-0.9" y="-3.6" width="1.8" height="7.2" rx="0.4" fill="#000" transform="rotate(120)"/><circle r="1.3" fill="#fff"/></g>
<g transform="translate(451.25,725.7) scale(1.0)"><rect x="-0.75" y="-2.9" width="1.5" height="1.4" fill="#000"/><rect x="-0.75" y="-0.7" width="1.5" height="3.9" fill="#000"/></g>
<path d="M364,737.5 H371.5 V745.5 H364 L366.7,741.5 Z" fill="#00b0dc"/>
<text x="379" y="745.7" font-size="10.5" fill="#000">AI1</text>
<path d="M364,750.5 H371.5 V758.5 H364 L366.7,754.5 Z" fill="#00b0dc"/>
<text x="379" y="758.7" font-size="10.5" fill="#000">AI2</text>
<text x="451.5" y="745.7" font-size="10.5" fill="#000" text-anchor="end">Q</text>
<path d="M460.5,737.5 H464 Q465.5,737.5 466.5,740 L467.3,741.5 L466.5,743 Q465.5,745.5 464,745.5 H460.5 Z" fill="#69be4f"/>
<rect x="551" y="588" width="90" height="45" fill="#69be4f"/>
<rect x="552" y="607" width="88" height="25" fill="#fff"/>
<text x="557.5" y="602.3" font-size="11" fill="#fff" font-weight="bold">UND</text>
<circle cx="616.5" cy="597.7" r="6.2" fill="#fff"/>
<circle cx="631.25" cy="597.7" r="6.2" fill="#fff"/>
<g transform="translate(616.5,597.7) scale(1.0)"><circle r="2.8" fill="#000"/><rect x="-0.9" y="-3.6" width="1.8" height="7.2" rx="0.4" fill="#000" transform="rotate(0)"/><rect x="-0.9" y="-3.6" width="1.8" height="7.2" rx="0.4" fill="#000" transform="rotate(60)"/><rect x="-0.9" y="-3.6" width="1.8" height="7.2" rx="0.4" fill="#000" transform="rotate(120)"/><circle r="1.3" fill="#fff"/></g>
<g transform="translate(631.25,597.7) scale(1.0)"><rect x="-0.75" y="-2.9" width="1.5" height="1.4" fill="#000"/><rect x="-0.75" y="-0.7" width="1.5" height="3.9" fill="#000"/></g>
<path d="M544,609.5 H551.5 V617.5 H544 L546.7,613.5 Z" fill="#f6b455"/>
<path d="M544,622.5 H551.5 V630.5 H544 L546.7,626.5 Z" fill="#f6b455"/>
<text x="559" y="630.7" font-size="10.5" fill="#000">I2</text>
<text x="631.5" y="617.7" font-size="10.5" fill="#000" text-anchor="end">Q</text>
<path d="M640.5,609.5 H644 Q645.5,609.5 646.5,612 L647.3,613.5 L646.5,615 Q645.5,617.5 644,617.5 H640.5 Z" fill="#69be4f"/>
<text x="559" y="617.7" font-size="10.5" fill="#e0004a">I1</text>
<circle cx="550.5" cy="613.5" r="2" fill="#fff" stroke="#000" stroke-width="1"/>
<rect x="909" y="645" width="90" height="45" fill="#69be4f"/>
<rect x="910" y="664" width="88" height="25" fill="#fff"/>
<text x="915.5" y="659.3" font-size="11" fill="#fff" font-weight="bold">Verzög...</text>
<circle cx="974.5" cy="654.7" r="6.2" fill="#fff"/>
<circle cx="989.25" cy="654.7" r="6.2" fill="#fff"/>
<g transform="translate(974.5,654.7) scale(1.0)"><circle r="2.8" fill="#000"/><rect x="-0.9" y="-3.6" width="1.8" height="7.2" rx="0.4" fill="#000" transform="rotate(0)"/><rect x="-0.9" y="-3.6" width="1.8" height="7.2" rx="0.4" fill="#000" transform="rotate(60)"/><rect x="-0.9" y="-3.6" width="1.8" height="7.2" rx="0.4" fill="#000" transform="rotate(120)"/><circle r="1.3" fill="#fff"/></g>
<g transform="translate(989.25,654.7) scale(1.0)"><rect x="-0.75" y="-2.9" width="1.5" height="1.4" fill="#000"/><rect x="-0.75" y="-0.7" width="1.5" height="3.9" fill="#000"/></g>
<path d="M902,667.5 H909.5 V675.5 H902 L904.7,671.5 Z" fill="#f6b455"/>
<text x="917" y="675.7" font-size="10.5" fill="#000">Tr</text>
<path d="M902,680.5 H909.5 V688.5 H902 L904.7,684.5 Z" fill="#d2d2cc"/>
<circle cx="920.3" cy="684.5" r="4.3" fill="#8f8f8f"/><rect x="917.3" y="684" width="6" height="1" fill="#fff"/><rect x="919.8" y="681.5" width="1" height="6" fill="#fff"/>
<text x="989.5" y="675.7" font-size="10.5" fill="#000" text-anchor="end">Q</text>
<path d="M998.5,667.5 H1002 Q1003.5,667.5 1004.5,670 L1005.3,671.5 L1004.5,673 Q1003.5,675.5 1002,675.5 H998.5 Z" fill="#69be4f"/>
<rect x="1011" y="11" width="181" height="98" fill="#69be4f"/>
<rect x="1012" y="31" width="179" height="13" fill="#fff"/>
<rect x="1012" y="44" width="179" height="64" fill="#b9d9fb"/>
<text x="1017.5" y="26" font-size="11" fill="#fff" font-weight="bold">Status</text>
<circle cx="1167.5" cy="21.2" r="6.2" fill="#fff"/>
<circle cx="1182.25" cy="21.2" r="6.2" fill="#fff"/>
<g transform="translate(1167.5,21.2) scale(1.0)"><circle r="2.8" fill="#000"/><rect x="-0.9" y="-3.6" width="1.8" height="7.2" rx="0.4" fill="#000" transform="rotate(0)"/><rect x="-0.9" y="-3.6" width="1.8" height="7.2" rx="0.4" fill="#000" transform="rotate(60)"/><rect x="-0.9" y="-3.6" width="1.8" height="7.2" rx="0.4" fill="#000" transform="rotate(120)"/><circle r="1.3" fill="#fff"/></g>
<g transform="translate(1182.25,21.2) scale(1.0)"><rect x="-0.75" y="-2.9" width="1.5" height="1.4" fill="#000"/><rect x="-0.75" y="-0.7" width="1.5" height="3.9" fill="#000"/></g>
<text x="1101.5" y="41.5" font-size="10.5" fill="#222" text-anchor="middle">Status</text>
<path d="M1004,47 H1011.5 V55 H1004 L1006.7,51 Z" fill="#f6b455"/>
<text x="1020" y="55" font-size="10.5" fill="#000">AI1</text>
<path d="M1004,59 H1011.5 V67 H1004 L1006.7,63 Z" fill="#f6b455"/>
<text x="1020" y="67" font-size="10.5" fill="#000">AI2</text>
<path d="M1004,72 H1011.5 V80 H1004 L1006.7,76 Z" fill="#f6b455"/>
<text x="1020" y="80" font-size="10.5" fill="#000">AI3</text>
<path d="M1004,85 H1011.5 V93 H1004 L1006.7,89 Z" fill="#f6b455"/>
<text x="1020" y="93" font-size="10.5" fill="#000">AI4</text>
<path d="M1004,97 H1011.5 V105 H1004 L1006.7,101 Z" fill="#d2d2cc"/>
<circle cx="1022.5" cy="101" r="4.2" fill="#fff"/><rect x="1019.5" y="100.5" width="6" height="1" fill="#000"/><rect x="1022" y="98" width="1" height="6" fill="#000"/>
<text x="1059" y="55" font-size="10.5" fill="#7a7a7a" textLength="86" lengthAdjust="spacing">Nicht zugeordnet</text>
<text x="1060" y="67" font-size="10.5" fill="#7a7a7a" textLength="86" lengthAdjust="spacing">Nicht zugeordnet</text>
<text x="1182.5" y="55" font-size="10.5" fill="#000" text-anchor="end">TQ</text>
<circle cx="1180" cy="63" r="4.2" fill="#fff"/><rect x="1177" y="62.5" width="6" height="1" fill="#000"/><rect x="1179.5" y="60" width="1" height="6" fill="#000"/>
<path d="M1191.5,47 H1195 Q1196.5,47 1197.5,49.5 L1198.3,51 L1197.5,52.5 Q1196.5,55 1195,55 H1191.5 Z" fill="#69be4f"/>
<path d="M1191.5,59 H1195 Q1196.5,59 1197.5,61.5 L1198.3,63 L1197.5,64.5 Q1196.5,67 1195,67 H1191.5 Z" fill="#d2d2cc"/>
<rect x="1069" y="492" width="180" height="97" fill="#69be4f"/>
<rect x="1070" y="511" width="178" height="77" fill="#fff"/>
<rect x="1070" y="511" width="178" height="13" fill="#ececec"/>
<text x="1075.5" y="506.3" font-size="11" fill="#fff" font-weight="bold">Schalter</text>
<circle cx="1224.5" cy="501.7" r="6.2" fill="#fff"/>
<circle cx="1239.25" cy="501.7" r="6.2" fill="#fff"/>
<g transform="translate(1224.5,501.7) scale(1.0)"><circle r="2.8" fill="#000"/><rect x="-0.9" y="-3.6" width="1.8" height="7.2" rx="0.4" fill="#000" transform="rotate(0)"/><rect x="-0.9" y="-3.6" width="1.8" height="7.2" rx="0.4" fill="#000" transform="rotate(60)"/><rect x="-0.9" y="-3.6" width="1.8" height="7.2" rx="0.4" fill="#000" transform="rotate(120)"/><circle r="1.3" fill="#fff"/></g>
<g transform="translate(1239.25,501.7) scale(1.0)"><rect x="-0.75" y="-2.9" width="1.5" height="1.4" fill="#000"/><rect x="-0.75" y="-0.7" width="1.5" height="3.9" fill="#000"/></g>
<text x="1159" y="521.5" font-size="10.5" fill="#222" text-anchor="middle">Schalter</text>
<path d="M1062,526.5 H1069.5 V534.5 H1062 L1064.7,530.5 Z" fill="#f6b455"/>
<text x="1077" y="534.7" font-size="10.5" fill="#000">Tr</text>
<path d="M1062,539.5 H1069.5 V547.5 H1062 L1064.7,543.5 Z" fill="#f6b455"/>
<text x="1077" y="547.7" font-size="10.5" fill="#000">R</text>
<path d="M1062,564.5 H1069.5 V572.5 H1062 L1064.7,568.5 Z" fill="#f6b455"/>
<text x="1077" y="572.7" font-size="10.5" fill="#000">O</text>
<path d="M1062,577.5 H1069.5 V585.5 H1062 L1064.7,581.5 Z" fill="#d2d2cc"/>
<circle cx="1080.3" cy="581.5" r="4.3" fill="#8f8f8f"/><rect x="1077.3" y="581" width="6" height="1" fill="#fff"/><rect x="1079.8" y="578.5" width="1" height="6" fill="#fff"/>
<text x="1115.5" y="534.7" font-size="10.5" fill="#7a7a7a" textLength="86" lengthAdjust="spacing">Nicht zugeordnet</text>
<text x="1117.5" y="547.7" font-size="10.5" fill="#7a7a7a" textLength="82" lengthAdjust="spacing">Bedienelemente</text>
<text x="1239.5" y="534.7" font-size="10.5" fill="#000" text-anchor="end">Q</text>
<circle cx="1237" cy="543.5" r="4.3" fill="#8f8f8f"/><rect x="1234" y="543" width="6" height="1" fill="#fff"/><rect x="1236.5" y="540.5" width="1" height="6" fill="#fff"/>
<path d="M1248.5,526.5 H1252 Q1253.5,526.5 1254.5,529 L1255.3,530.5 L1254.5,532 Q1253.5,534.5 1252,534.5 H1248.5 Z" fill="#69be4f"/>
<path d="M1248.5,539.5 H1252 Q1253.5,539.5 1254.5,542 L1255.3,543.5 L1254.5,545 Q1253.5,547.5 1252,547.5 H1248.5 Z" fill="#d2d2cc"/>
<rect x="282" y="774" width="179" height="71" fill="#69be4f"/>
<rect x="283" y="793" width="177" height="51" fill="#fff"/>
<rect x="283" y="793" width="177" height="13" fill="#ececec"/>
<text x="288.5" y="788.3" font-size="11" fill="#fff" font-weight="bold">Schaltuhr</text>
<circle cx="436.5" cy="783.7" r="6.2" fill="#fff"/>
<circle cx="451.25" cy="783.7" r="6.2" fill="#fff"/>
<g transform="translate(436.5,783.7) scale(1.0)"><circle r="2.8" fill="#000"/><rect x="-0.9" y="-3.6" width="1.8" height="7.2" rx="0.4" fill="#000" transform="rotate(0)"/><rect x="-0.9" y="-3.6" width="1.8" height="7.2" rx="0.4" fill="#000" transform="rotate(60)"/><rect x="-0.9" y="-3.6" width="1.8" height="7.2" rx="0.4" fill="#000" transform="rotate(120)"/><circle r="1.3" fill="#fff"/></g>
<g transform="translate(451.25,783.7) scale(1.0)"><rect x="-0.75" y="-2.9" width="1.5" height="1.4" fill="#000"/><rect x="-0.75" y="-0.7" width="1.5" height="3.9" fill="#000"/></g>
<text x="371.5" y="803.5" font-size="10.5" fill="#222" text-anchor="middle">Schaltuhr</text>
<path d="M275,808.5 H282.5 V816.5 H275 L277.7,812.5 Z" fill="#f6b455"/>
<text x="290" y="816.7" font-size="10.5" fill="#000">Tr</text>
<path d="M275,820.5 H282.5 V828.5 H275 L277.7,824.5 Z" fill="#f6b455"/>
<text x="290" y="828.7" font-size="10.5" fill="#000">R</text>
<path d="M275,833.5 H282.5 V841.5 H275 L277.7,837.5 Z" fill="#d2d2cc"/>
<circle cx="293.3" cy="837.5" r="4.3" fill="#8f8f8f"/><rect x="290.3" y="837" width="6" height="1" fill="#fff"/><rect x="292.8" y="834.5" width="1" height="6" fill="#fff"/>
<text x="328" y="816.7" font-size="10.5" fill="#7a7a7a" textLength="86" lengthAdjust="spacing">Nicht zugeordnet</text>
<text x="328" y="828.7" font-size="10.5" fill="#7a7a7a" textLength="86" lengthAdjust="spacing">Nicht zugeordnet</text>
<text x="451.5" y="816.7" font-size="10.5" fill="#000" text-anchor="end">AQ</text>
<circle cx="449" cy="824.5" r="4.3" fill="#8f8f8f"/><rect x="446" y="824" width="6" height="1" fill="#fff"/><rect x="448.5" y="821.5" width="1" height="6" fill="#fff"/>
<path d="M460.5,808.5 H464 Q465.5,808.5 466.5,811 L467.3,812.5 L466.5,814 Q465.5,816.5 464,816.5 H460.5 Z" fill="#69be4f"/>
<path d="M460.5,820.5 H464 Q465.5,820.5 466.5,823 L467.3,824.5 L466.5,826 Q465.5,828.5 464,828.5 H460.5 Z" fill="#d2d2cc"/>
<path d="M32.25,44.5 H168 V57 H32.25 A6.25,6.25 0 0 1 32.25,44.5 Z" fill="#fff" stroke="#3c3c3c" stroke-width="1"/>
<rect x="39" y="46" width="96.5" height="10" fill="#ebebeb"/>
<rect x="135.5" y="45" width="32" height="12" fill="#fff"/>
<path d="M135.5,44.5 V57" stroke="#3c3c3c" stroke-width="1"/>
<g transform="translate(33.2,51) scale(0.95)"><circle r="2.8" fill="#000"/><rect x="-0.9" y="-3.6" width="1.8" height="7.2" rx="0.4" fill="#000" transform="rotate(0)"/><rect x="-0.9" y="-3.6" width="1.8" height="7.2" rx="0.4" fill="#000" transform="rotate(60)"/><rect x="-0.9" y="-3.6" width="1.8" height="7.2" rx="0.4" fill="#000" transform="rotate(120)"/><circle r="1.3" fill="#fff"/></g>
<text x="46.5" y="53.3" font-size="8" fill="#333">Niederschlag  +1...</text>
<text x="151.75" y="54.9" font-size="10.5" fill="#333" font-weight="bold" text-anchor="middle">VI</text>
<path d="M167.5,47 H171 Q172.5,47 173.5,49.5 L174.3,51 L173.5,52.5 Q172.5,55 171,55 H167.5 Z" fill="#69be4f"/>
<path d="M32.25,57.5 H168 V70 H32.25 A6.25,6.25 0 0 1 32.25,57.5 Z" fill="#fff" stroke="#3c3c3c" stroke-width="1"/>
<rect x="39" y="59" width="96.5" height="10" fill="#ebebeb"/>
<rect x="135.5" y="58" width="32" height="12" fill="#fff"/>
<path d="M135.5,57.5 V70" stroke="#3c3c3c" stroke-width="1"/>
<g transform="translate(33.2,64) scale(0.95)"><circle r="2.8" fill="#000"/><rect x="-0.9" y="-3.6" width="1.8" height="7.2" rx="0.4" fill="#000" transform="rotate(0)"/><rect x="-0.9" y="-3.6" width="1.8" height="7.2" rx="0.4" fill="#000" transform="rotate(60)"/><rect x="-0.9" y="-3.6" width="1.8" height="7.2" rx="0.4" fill="#000" transform="rotate(120)"/><circle r="1.3" fill="#fff"/></g>
<text x="46.5" y="66.3" font-size="8" fill="#333">Niederschlag  +2...</text>
<text x="151.75" y="67.9" font-size="10.5" fill="#333" font-weight="bold" text-anchor="middle">VI</text>
<path d="M167.5,60 H171 Q172.5,60 173.5,62.5 L174.3,64 L173.5,65.5 Q172.5,68 171,68 H167.5 Z" fill="#69be4f"/>
<path d="M26.25,140.5 H161 V153 H26.25 A6.25,6.25 0 0 1 26.25,140.5 Z" fill="#fff" stroke="#3c3c3c" stroke-width="1"/>
<rect x="33" y="142" width="95.5" height="10" fill="#ebebeb"/>
<rect x="128.5" y="141" width="32" height="12" fill="#fff"/>
<path d="M128.5,140.5 V153" stroke="#3c3c3c" stroke-width="1"/>
<g transform="translate(27.2,147) scale(0.95)"><circle r="2.8" fill="#000"/><rect x="-0.9" y="-3.6" width="1.8" height="7.2" rx="0.4" fill="#000" transform="rotate(0)"/><rect x="-0.9" y="-3.6" width="1.8" height="7.2" rx="0.4" fill="#000" transform="rotate(60)"/><rect x="-0.9" y="-3.6" width="1.8" height="7.2" rx="0.4" fill="#000" transform="rotate(120)"/><circle r="1.3" fill="#fff"/></g>
<text x="40.5" y="149.3" font-size="8" fill="#333">Niederschlag  +1...</text>
<text x="144.75" y="150.9" font-size="10.5" fill="#333" font-weight="bold" text-anchor="middle">VI</text>
<path d="M160.5,143 H164 Q165.5,143 166.5,145.5 L167.3,147 L166.5,148.5 Q165.5,151 164,151 H160.5 Z" fill="#69be4f"/>
<path d="M26.25,153.5 H161 V166 H26.25 A6.25,6.25 0 0 1 26.25,153.5 Z" fill="#fff" stroke="#3c3c3c" stroke-width="1"/>
<rect x="33" y="155" width="95.5" height="10" fill="#ebebeb"/>
<rect x="128.5" y="154" width="32" height="12" fill="#fff"/>
<path d="M128.5,153.5 V166" stroke="#3c3c3c" stroke-width="1"/>
<g transform="translate(27.2,160) scale(0.95)"><circle r="2.8" fill="#000"/><rect x="-0.9" y="-3.6" width="1.8" height="7.2" rx="0.4" fill="#000" transform="rotate(0)"/><rect x="-0.9" y="-3.6" width="1.8" height="7.2" rx="0.4" fill="#000" transform="rotate(60)"/><rect x="-0.9" y="-3.6" width="1.8" height="7.2" rx="0.4" fill="#000" transform="rotate(120)"/><circle r="1.3" fill="#fff"/></g>
<text x="40.5" y="162.3" font-size="8" fill="#333">Niederschlag  +2...</text>
<text x="144.75" y="163.9" font-size="10.5" fill="#333" font-weight="bold" text-anchor="middle">VI</text>
<path d="M160.5,156 H164 Q165.5,156 166.5,158.5 L167.3,160 L166.5,161.5 Q165.5,164 164,164 H160.5 Z" fill="#69be4f"/>
<path d="M26.25,166.5 H161 V179 H26.25 A6.25,6.25 0 0 1 26.25,166.5 Z" fill="#fff" stroke="#3c3c3c" stroke-width="1"/>
<rect x="33" y="168" width="95.5" height="10" fill="#ebebeb"/>
<rect x="128.5" y="167" width="32" height="12" fill="#fff"/>
<path d="M128.5,166.5 V179" stroke="#3c3c3c" stroke-width="1"/>
<g transform="translate(27.2,173) scale(0.95)"><circle r="2.8" fill="#000"/><rect x="-0.9" y="-3.6" width="1.8" height="7.2" rx="0.4" fill="#000" transform="rotate(0)"/><rect x="-0.9" y="-3.6" width="1.8" height="7.2" rx="0.4" fill="#000" transform="rotate(60)"/><rect x="-0.9" y="-3.6" width="1.8" height="7.2" rx="0.4" fill="#000" transform="rotate(120)"/><circle r="1.3" fill="#fff"/></g>
<text x="40.5" y="175.3" font-size="8" fill="#333">Niederschlag  +3...</text>
<text x="144.75" y="176.9" font-size="10.5" fill="#333" font-weight="bold" text-anchor="middle">VI</text>
<path d="M160.5,169 H164 Q165.5,169 166.5,171.5 L167.3,173 L166.5,174.5 Q165.5,177 164,177 H160.5 Z" fill="#69be4f"/>
<path d="M26.25,179.5 H161 V192 H26.25 A6.25,6.25 0 0 1 26.25,179.5 Z" fill="#fff" stroke="#3c3c3c" stroke-width="1"/>
<rect x="33" y="181" width="95.5" height="10" fill="#ebebeb"/>
<rect x="128.5" y="180" width="32" height="12" fill="#fff"/>
<path d="M128.5,179.5 V192" stroke="#3c3c3c" stroke-width="1"/>
<g transform="translate(27.2,186) scale(0.95)"><circle r="2.8" fill="#000"/><rect x="-0.9" y="-3.6" width="1.8" height="7.2" rx="0.4" fill="#000" transform="rotate(0)"/><rect x="-0.9" y="-3.6" width="1.8" height="7.2" rx="0.4" fill="#000" transform="rotate(60)"/><rect x="-0.9" y="-3.6" width="1.8" height="7.2" rx="0.4" fill="#000" transform="rotate(120)"/><circle r="1.3" fill="#fff"/></g>
<text x="40.5" y="188.3" font-size="8" fill="#333">Niederschlag  +4...</text>
<text x="144.75" y="189.9" font-size="10.5" fill="#333" font-weight="bold" text-anchor="middle">VI</text>
<path d="M160.5,182 H164 Q165.5,182 166.5,184.5 L167.3,186 L166.5,187.5 Q165.5,190 164,190 H160.5 Z" fill="#69be4f"/>
<path d="M26.25,242.5 H161 V255 H26.25 A6.25,6.25 0 0 1 26.25,242.5 Z" fill="#fff" stroke="#3c3c3c" stroke-width="1"/>
<rect x="33" y="244" width="95.5" height="10" fill="#ebebeb"/>
<rect x="128.5" y="243" width="32" height="12" fill="#fff"/>
<path d="M128.5,242.5 V255" stroke="#3c3c3c" stroke-width="1"/>
<g transform="translate(27.2,249) scale(0.95)"><circle r="2.8" fill="#000"/><rect x="-0.9" y="-3.6" width="1.8" height="7.2" rx="0.4" fill="#000" transform="rotate(0)"/><rect x="-0.9" y="-3.6" width="1.8" height="7.2" rx="0.4" fill="#000" transform="rotate(60)"/><rect x="-0.9" y="-3.6" width="1.8" height="7.2" rx="0.4" fill="#000" transform="rotate(120)"/><circle r="1.3" fill="#fff"/></g>
<text x="40.5" y="251.3" font-size="8" fill="#333">Niederschlag  +1...</text>
<text x="144.75" y="252.9" font-size="10.5" fill="#333" font-weight="bold" text-anchor="middle">VI</text>
<path d="M160.5,245 H164 Q165.5,245 166.5,247.5 L167.3,249 L166.5,250.5 Q165.5,253 164,253 H160.5 Z" fill="#69be4f"/>
<path d="M26.25,255.5 H161 V268 H26.25 A6.25,6.25 0 0 1 26.25,255.5 Z" fill="#fff" stroke="#3c3c3c" stroke-width="1"/>
<rect x="33" y="257" width="95.5" height="10" fill="#ebebeb"/>
<rect x="128.5" y="256" width="32" height="12" fill="#fff"/>
<path d="M128.5,255.5 V268" stroke="#3c3c3c" stroke-width="1"/>
<g transform="translate(27.2,262) scale(0.95)"><circle r="2.8" fill="#000"/><rect x="-0.9" y="-3.6" width="1.8" height="7.2" rx="0.4" fill="#000" transform="rotate(0)"/><rect x="-0.9" y="-3.6" width="1.8" height="7.2" rx="0.4" fill="#000" transform="rotate(60)"/><rect x="-0.9" y="-3.6" width="1.8" height="7.2" rx="0.4" fill="#000" transform="rotate(120)"/><circle r="1.3" fill="#fff"/></g>
<text x="40.5" y="264.3" font-size="8" fill="#333">Niederschlag  +2...</text>
<text x="144.75" y="265.9" font-size="10.5" fill="#333" font-weight="bold" text-anchor="middle">VI</text>
<path d="M160.5,258 H164 Q165.5,258 166.5,260.5 L167.3,262 L166.5,263.5 Q165.5,266 164,266 H160.5 Z" fill="#69be4f"/>
<path d="M26.25,268.5 H161 V281 H26.25 A6.25,6.25 0 0 1 26.25,268.5 Z" fill="#fff" stroke="#3c3c3c" stroke-width="1"/>
<rect x="33" y="270" width="95.5" height="10" fill="#ebebeb"/>
<rect x="128.5" y="269" width="32" height="12" fill="#fff"/>
<path d="M128.5,268.5 V281" stroke="#3c3c3c" stroke-width="1"/>
<g transform="translate(27.2,275) scale(0.95)"><circle r="2.8" fill="#000"/><rect x="-0.9" y="-3.6" width="1.8" height="7.2" rx="0.4" fill="#000" transform="rotate(0)"/><rect x="-0.9" y="-3.6" width="1.8" height="7.2" rx="0.4" fill="#000" transform="rotate(60)"/><rect x="-0.9" y="-3.6" width="1.8" height="7.2" rx="0.4" fill="#000" transform="rotate(120)"/><circle r="1.3" fill="#fff"/></g>
<text x="40.5" y="277.3" font-size="8" fill="#333">Niederschlag  +3...</text>
<text x="144.75" y="278.9" font-size="10.5" fill="#333" font-weight="bold" text-anchor="middle">VI</text>
<path d="M160.5,271 H164 Q165.5,271 166.5,273.5 L167.3,275 L166.5,276.5 Q165.5,279 164,279 H160.5 Z" fill="#69be4f"/>
<path d="M26.25,281.5 H161 V294 H26.25 A6.25,6.25 0 0 1 26.25,281.5 Z" fill="#fff" stroke="#3c3c3c" stroke-width="1"/>
<rect x="33" y="283" width="95.5" height="10" fill="#ebebeb"/>
<rect x="128.5" y="282" width="32" height="12" fill="#fff"/>
<path d="M128.5,281.5 V294" stroke="#3c3c3c" stroke-width="1"/>
<g transform="translate(27.2,288) scale(0.95)"><circle r="2.8" fill="#000"/><rect x="-0.9" y="-3.6" width="1.8" height="7.2" rx="0.4" fill="#000" transform="rotate(0)"/><rect x="-0.9" y="-3.6" width="1.8" height="7.2" rx="0.4" fill="#000" transform="rotate(60)"/><rect x="-0.9" y="-3.6" width="1.8" height="7.2" rx="0.4" fill="#000" transform="rotate(120)"/><circle r="1.3" fill="#fff"/></g>
<text x="40.5" y="290.3" font-size="8" fill="#333">Niederschlag  +4...</text>
<text x="144.75" y="291.9" font-size="10.5" fill="#333" font-weight="bold" text-anchor="middle">VI</text>
<path d="M160.5,284 H164 Q165.5,284 166.5,286.5 L167.3,288 L166.5,289.5 Q165.5,292 164,292 H160.5 Z" fill="#69be4f"/>
<path d="M26.25,332.5 H161 V345 H26.25 A6.25,6.25 0 0 1 26.25,332.5 Z" fill="#fff" stroke="#3c3c3c" stroke-width="1"/>
<rect x="33" y="334" width="95.5" height="10" fill="#ebebeb"/>
<rect x="128.5" y="333" width="32" height="12" fill="#fff"/>
<path d="M128.5,332.5 V345" stroke="#3c3c3c" stroke-width="1"/>
<g transform="translate(27.2,339) scale(0.95)"><circle r="2.8" fill="#000"/><rect x="-0.9" y="-3.6" width="1.8" height="7.2" rx="0.4" fill="#000" transform="rotate(0)"/><rect x="-0.9" y="-3.6" width="1.8" height="7.2" rx="0.4" fill="#000" transform="rotate(60)"/><rect x="-0.9" y="-3.6" width="1.8" height="7.2" rx="0.4" fill="#000" transform="rotate(120)"/><circle r="1.3" fill="#fff"/></g>
<text x="40.5" y="341.3" font-size="8" fill="#333">Niederschlag  +5...</text>
<text x="144.75" y="342.9" font-size="10.5" fill="#333" font-weight="bold" text-anchor="middle">VI</text>
<path d="M160.5,335 H164 Q165.5,335 166.5,337.5 L167.3,339 L166.5,340.5 Q165.5,343 164,343 H160.5 Z" fill="#69be4f"/>
<path d="M26.25,345.5 H161 V358 H26.25 A6.25,6.25 0 0 1 26.25,345.5 Z" fill="#fff" stroke="#3c3c3c" stroke-width="1"/>
<rect x="33" y="347" width="95.5" height="10" fill="#ebebeb"/>
<rect x="128.5" y="346" width="32" height="12" fill="#fff"/>
<path d="M128.5,345.5 V358" stroke="#3c3c3c" stroke-width="1"/>
<g transform="translate(27.2,352) scale(0.95)"><circle r="2.8" fill="#000"/><rect x="-0.9" y="-3.6" width="1.8" height="7.2" rx="0.4" fill="#000" transform="rotate(0)"/><rect x="-0.9" y="-3.6" width="1.8" height="7.2" rx="0.4" fill="#000" transform="rotate(60)"/><rect x="-0.9" y="-3.6" width="1.8" height="7.2" rx="0.4" fill="#000" transform="rotate(120)"/><circle r="1.3" fill="#fff"/></g>
<text x="40.5" y="354.3" font-size="8" fill="#333">Niederschlag  +6...</text>
<text x="144.75" y="355.9" font-size="10.5" fill="#333" font-weight="bold" text-anchor="middle">VI</text>
<path d="M160.5,348 H164 Q165.5,348 166.5,350.5 L167.3,352 L166.5,353.5 Q165.5,356 164,356 H160.5 Z" fill="#69be4f"/>
<path d="M26.25,422.5 H161 V435 H26.25 A6.25,6.25 0 0 1 26.25,422.5 Z" fill="#fff" stroke="#3c3c3c" stroke-width="1"/>
<rect x="33" y="424" width="95.5" height="10" fill="#ebebeb"/>
<rect x="128.5" y="423" width="32" height="12" fill="#fff"/>
<path d="M128.5,422.5 V435" stroke="#3c3c3c" stroke-width="1"/>
<g transform="translate(27.2,429) scale(0.95)"><circle r="2.8" fill="#000"/><rect x="-0.9" y="-3.6" width="1.8" height="7.2" rx="0.4" fill="#000" transform="rotate(0)"/><rect x="-0.9" y="-3.6" width="1.8" height="7.2" rx="0.4" fill="#000" transform="rotate(60)"/><rect x="-0.9" y="-3.6" width="1.8" height="7.2" rx="0.4" fill="#000" transform="rotate(120)"/><circle r="1.3" fill="#fff"/></g>
<text x="40.5" y="431.3" font-size="8" fill="#333">Niederschlag  +1...</text>
<text x="144.75" y="432.9" font-size="10.5" fill="#333" font-weight="bold" text-anchor="middle">VI</text>
<path d="M160.5,425 H164 Q165.5,425 166.5,427.5 L167.3,429 L166.5,430.5 Q165.5,433 164,433 H160.5 Z" fill="#69be4f"/>
<path d="M26.25,434.5 H161 V447 H26.25 A6.25,6.25 0 0 1 26.25,434.5 Z" fill="#fff" stroke="#3c3c3c" stroke-width="1"/>
<rect x="33" y="436" width="95.5" height="10" fill="#ebebeb"/>
<rect x="128.5" y="435" width="32" height="12" fill="#fff"/>
<path d="M128.5,434.5 V447" stroke="#3c3c3c" stroke-width="1"/>
<g transform="translate(27.2,441) scale(0.95)"><circle r="2.8" fill="#000"/><rect x="-0.9" y="-3.6" width="1.8" height="7.2" rx="0.4" fill="#000" transform="rotate(0)"/><rect x="-0.9" y="-3.6" width="1.8" height="7.2" rx="0.4" fill="#000" transform="rotate(60)"/><rect x="-0.9" y="-3.6" width="1.8" height="7.2" rx="0.4" fill="#000" transform="rotate(120)"/><circle r="1.3" fill="#fff"/></g>
<text x="40.5" y="443.3" font-size="8" fill="#333">Niederschlag  +2...</text>
<text x="144.75" y="444.9" font-size="10.5" fill="#333" font-weight="bold" text-anchor="middle">VI</text>
<path d="M160.5,437 H164 Q165.5,437 166.5,439.5 L167.3,441 L166.5,442.5 Q165.5,445 164,445 H160.5 Z" fill="#69be4f"/>
<path d="M26.25,447.5 H161 V460 H26.25 A6.25,6.25 0 0 1 26.25,447.5 Z" fill="#fff" stroke="#3c3c3c" stroke-width="1"/>
<rect x="33" y="449" width="95.5" height="10" fill="#ebebeb"/>
<rect x="128.5" y="448" width="32" height="12" fill="#fff"/>
<path d="M128.5,447.5 V460" stroke="#3c3c3c" stroke-width="1"/>
<g transform="translate(27.2,454) scale(0.95)"><circle r="2.8" fill="#000"/><rect x="-0.9" y="-3.6" width="1.8" height="7.2" rx="0.4" fill="#000" transform="rotate(0)"/><rect x="-0.9" y="-3.6" width="1.8" height="7.2" rx="0.4" fill="#000" transform="rotate(60)"/><rect x="-0.9" y="-3.6" width="1.8" height="7.2" rx="0.4" fill="#000" transform="rotate(120)"/><circle r="1.3" fill="#fff"/></g>
<text x="40.5" y="456.3" font-size="8" fill="#333">Niederschlag  +3...</text>
<text x="144.75" y="457.9" font-size="10.5" fill="#333" font-weight="bold" text-anchor="middle">VI</text>
<path d="M160.5,450 H164 Q165.5,450 166.5,452.5 L167.3,454 L166.5,455.5 Q165.5,458 164,458 H160.5 Z" fill="#69be4f"/>
<path d="M26.25,460.5 H161 V473 H26.25 A6.25,6.25 0 0 1 26.25,460.5 Z" fill="#fff" stroke="#3c3c3c" stroke-width="1"/>
<rect x="33" y="462" width="95.5" height="10" fill="#ebebeb"/>
<rect x="128.5" y="461" width="32" height="12" fill="#fff"/>
<path d="M128.5,460.5 V473" stroke="#3c3c3c" stroke-width="1"/>
<g transform="translate(27.2,467) scale(0.95)"><circle r="2.8" fill="#000"/><rect x="-0.9" y="-3.6" width="1.8" height="7.2" rx="0.4" fill="#000" transform="rotate(0)"/><rect x="-0.9" y="-3.6" width="1.8" height="7.2" rx="0.4" fill="#000" transform="rotate(60)"/><rect x="-0.9" y="-3.6" width="1.8" height="7.2" rx="0.4" fill="#000" transform="rotate(120)"/><circle r="1.3" fill="#fff"/></g>
<text x="40.5" y="469.3" font-size="8" fill="#333">Niederschlag  +4...</text>
<text x="144.75" y="470.9" font-size="10.5" fill="#333" font-weight="bold" text-anchor="middle">VI</text>
<path d="M160.5,463 H164 Q165.5,463 166.5,465.5 L167.3,467 L166.5,468.5 Q165.5,471 164,471 H160.5 Z" fill="#69be4f"/>
<path d="M26.25,511.5 H161 V524 H26.25 A6.25,6.25 0 0 1 26.25,511.5 Z" fill="#fff" stroke="#3c3c3c" stroke-width="1"/>
<rect x="33" y="513" width="95.5" height="10" fill="#ebebeb"/>
<rect x="128.5" y="512" width="32" height="12" fill="#fff"/>
<path d="M128.5,511.5 V524" stroke="#3c3c3c" stroke-width="1"/>
<g transform="translate(27.2,518) scale(0.95)"><circle r="2.8" fill="#000"/><rect x="-0.9" y="-3.6" width="1.8" height="7.2" rx="0.4" fill="#000" transform="rotate(0)"/><rect x="-0.9" y="-3.6" width="1.8" height="7.2" rx="0.4" fill="#000" transform="rotate(60)"/><rect x="-0.9" y="-3.6" width="1.8" height="7.2" rx="0.4" fill="#000" transform="rotate(120)"/><circle r="1.3" fill="#fff"/></g>
<text x="40.5" y="520.3" font-size="8" fill="#333">Niederschlag  +5...</text>
<text x="144.75" y="521.9" font-size="10.5" fill="#333" font-weight="bold" text-anchor="middle">VI</text>
<path d="M160.5,514 H164 Q165.5,514 166.5,516.5 L167.3,518 L166.5,519.5 Q165.5,522 164,522 H160.5 Z" fill="#69be4f"/>
<path d="M26.25,524.5 H161 V537 H26.25 A6.25,6.25 0 0 1 26.25,524.5 Z" fill="#fff" stroke="#3c3c3c" stroke-width="1"/>
<rect x="33" y="526" width="95.5" height="10" fill="#ebebeb"/>
<rect x="128.5" y="525" width="32" height="12" fill="#fff"/>
<path d="M128.5,524.5 V537" stroke="#3c3c3c" stroke-width="1"/>
<g transform="translate(27.2,531) scale(0.95)"><circle r="2.8" fill="#000"/><rect x="-0.9" y="-3.6" width="1.8" height="7.2" rx="0.4" fill="#000" transform="rotate(0)"/><rect x="-0.9" y="-3.6" width="1.8" height="7.2" rx="0.4" fill="#000" transform="rotate(60)"/><rect x="-0.9" y="-3.6" width="1.8" height="7.2" rx="0.4" fill="#000" transform="rotate(120)"/><circle r="1.3" fill="#fff"/></g>
<text x="40.5" y="533.3" font-size="8" fill="#333">Niederschlag  +6...</text>
<text x="144.75" y="534.9" font-size="10.5" fill="#333" font-weight="bold" text-anchor="middle">VI</text>
<path d="M160.5,527 H164 Q165.5,527 166.5,529.5 L167.3,531 L166.5,532.5 Q165.5,535 164,535 H160.5 Z" fill="#69be4f"/>
<path d="M26.25,536.5 H161 V549 H26.25 A6.25,6.25 0 0 1 26.25,536.5 Z" fill="#fff" stroke="#3c3c3c" stroke-width="1"/>
<rect x="33" y="538" width="95.5" height="10" fill="#ebebeb"/>
<rect x="128.5" y="537" width="32" height="12" fill="#fff"/>
<path d="M128.5,536.5 V549" stroke="#3c3c3c" stroke-width="1"/>
<g transform="translate(27.2,543) scale(0.95)"><circle r="2.8" fill="#000"/><rect x="-0.9" y="-3.6" width="1.8" height="7.2" rx="0.4" fill="#000" transform="rotate(0)"/><rect x="-0.9" y="-3.6" width="1.8" height="7.2" rx="0.4" fill="#000" transform="rotate(60)"/><rect x="-0.9" y="-3.6" width="1.8" height="7.2" rx="0.4" fill="#000" transform="rotate(120)"/><circle r="1.3" fill="#fff"/></g>
<text x="40.5" y="545.3" font-size="8" fill="#333">Niederschlag  +7...</text>
<text x="144.75" y="546.9" font-size="10.5" fill="#333" font-weight="bold" text-anchor="middle">VI</text>
<path d="M160.5,539 H164 Q165.5,539 166.5,541.5 L167.3,543 L166.5,544.5 Q165.5,547 164,547 H160.5 Z" fill="#69be4f"/>
<path d="M26.25,549.5 H161 V562 H26.25 A6.25,6.25 0 0 1 26.25,549.5 Z" fill="#fff" stroke="#3c3c3c" stroke-width="1"/>
<rect x="33" y="551" width="95.5" height="10" fill="#ebebeb"/>
<rect x="128.5" y="550" width="32" height="12" fill="#fff"/>
<path d="M128.5,549.5 V562" stroke="#3c3c3c" stroke-width="1"/>
<g transform="translate(27.2,556) scale(0.95)"><circle r="2.8" fill="#000"/><rect x="-0.9" y="-3.6" width="1.8" height="7.2" rx="0.4" fill="#000" transform="rotate(0)"/><rect x="-0.9" y="-3.6" width="1.8" height="7.2" rx="0.4" fill="#000" transform="rotate(60)"/><rect x="-0.9" y="-3.6" width="1.8" height="7.2" rx="0.4" fill="#000" transform="rotate(120)"/><circle r="1.3" fill="#fff"/></g>
<text x="40.5" y="558.3" font-size="8" fill="#333">Niederschlag  +8...</text>
<text x="144.75" y="559.9" font-size="10.5" fill="#333" font-weight="bold" text-anchor="middle">VI</text>
<path d="M160.5,552 H164 Q165.5,552 166.5,554.5 L167.3,556 L166.5,557.5 Q165.5,560 164,560 H160.5 Z" fill="#69be4f"/>
<path d="M154.25,607.5 H289 V620 H154.25 A6.25,6.25 0 0 1 154.25,607.5 Z" fill="#fff" stroke="#3c3c3c" stroke-width="1"/>
<rect x="161" y="609" width="95.5" height="10" fill="#ebebeb"/>
<rect x="256.5" y="608" width="32" height="12" fill="#fff"/>
<path d="M256.5,607.5 V620" stroke="#3c3c3c" stroke-width="1"/>
<g transform="translate(155.2,614) scale(0.95)"><circle r="2.8" fill="#000"/><rect x="-0.9" y="-3.6" width="1.8" height="7.2" rx="0.4" fill="#000" transform="rotate(0)"/><rect x="-0.9" y="-3.6" width="1.8" height="7.2" rx="0.4" fill="#000" transform="rotate(60)"/><rect x="-0.9" y="-3.6" width="1.8" height="7.2" rx="0.4" fill="#000" transform="rotate(120)"/><circle r="1.3" fill="#fff"/></g>
<text x="169.5" y="617.9" font-size="11" fill="#333" font-weight="bold">Regen WS</text>
<text x="272.75" y="617.9" font-size="10.5" fill="#333" font-weight="bold" text-anchor="middle">Ir</text>
<path d="M288.5,610 H292 Q293.5,610 294.5,612.5 L295.3,614 L294.5,615.5 Q293.5,618 292,618 H288.5 Z" fill="#69be4f"/>
<path d="M154.25,620.5 H289 V633 H154.25 A6.25,6.25 0 0 1 154.25,620.5 Z" fill="#fff" stroke="#3c3c3c" stroke-width="1"/>
<rect x="161" y="622" width="95.5" height="10" fill="#ebebeb"/>
<rect x="256.5" y="621" width="32" height="12" fill="#ffff00"/>
<path d="M256.5,620.5 V633" stroke="#3c3c3c" stroke-width="1"/>
<g transform="translate(155.2,627) scale(0.95)"><circle r="2.8" fill="#000"/><rect x="-0.9" y="-3.6" width="1.8" height="7.2" rx="0.4" fill="#000" transform="rotate(0)"/><rect x="-0.9" y="-3.6" width="1.8" height="7.2" rx="0.4" fill="#000" transform="rotate(60)"/><rect x="-0.9" y="-3.6" width="1.8" height="7.2" rx="0.4" fill="#000" transform="rotate(120)"/><circle r="1.3" fill="#fff"/></g>
<text x="169.5" y="630.9" font-size="11" fill="#333" font-weight="bold">WINTER AUS</text>
<text x="272.75" y="630.9" font-size="10.5" fill="#333" font-weight="bold" text-anchor="middle">M</text>
<path d="M288.5,623 H292 Q293.5,623 294.5,625.5 L295.3,627 L294.5,628.5 Q293.5,631 292,631 H288.5 Z" fill="#69be4f"/>
<path d="M154.25,652.5 H289 V665 H154.25 A6.25,6.25 0 0 1 154.25,652.5 Z" fill="#fff" stroke="#3c3c3c" stroke-width="1"/>
<rect x="161" y="654" width="95.5" height="10" fill="#ebebeb"/>
<rect x="256.5" y="653" width="32" height="12" fill="#fff"/>
<path d="M256.5,652.5 V665" stroke="#3c3c3c" stroke-width="1"/>
<g transform="translate(155.2,659) scale(0.95)"><circle r="2.8" fill="#000"/><rect x="-0.9" y="-3.6" width="1.8" height="7.2" rx="0.4" fill="#000" transform="rotate(0)"/><rect x="-0.9" y="-3.6" width="1.8" height="7.2" rx="0.4" fill="#000" transform="rotate(60)"/><rect x="-0.9" y="-3.6" width="1.8" height="7.2" rx="0.4" fill="#000" transform="rotate(120)"/><circle r="1.3" fill="#fff"/></g>
<text x="168.5" y="661.3" font-size="8" fill="#333">BWM EG Küche</text>
<text x="272.75" y="662.9" font-size="10.5" fill="#333" font-weight="bold" text-anchor="middle">Mv</text>
<path d="M288.5,655 H292 Q293.5,655 294.5,657.5 L295.3,659 L294.5,660.5 Q293.5,663 292,663 H288.5 Z" fill="#69be4f"/>
<path d="M154.25,665.5 H289 V678 H154.25 A6.25,6.25 0 0 1 154.25,665.5 Z" fill="#fff" stroke="#3c3c3c" stroke-width="1"/>
<rect x="161" y="667" width="95.5" height="10" fill="#ebebeb"/>
<rect x="256.5" y="666" width="32" height="12" fill="#fff"/>
<path d="M256.5,665.5 V678" stroke="#3c3c3c" stroke-width="1"/>
<g transform="translate(155.2,672) scale(0.95)"><circle r="2.8" fill="#000"/><rect x="-0.9" y="-3.6" width="1.8" height="7.2" rx="0.4" fill="#000" transform="rotate(0)"/><rect x="-0.9" y="-3.6" width="1.8" height="7.2" rx="0.4" fill="#000" transform="rotate(60)"/><rect x="-0.9" y="-3.6" width="1.8" height="7.2" rx="0.4" fill="#000" transform="rotate(120)"/><circle r="1.3" fill="#fff"/></g>
<text x="169.5" y="675.9" font-size="11" fill="#333" font-weight="bold">BWM EG VR</text>
<text x="272.75" y="675.9" font-size="10.5" fill="#333" font-weight="bold" text-anchor="middle">Mv</text>
<path d="M288.5,668 H292 Q293.5,668 294.5,670.5 L295.3,672 L294.5,673.5 Q293.5,676 292,676 H288.5 Z" fill="#69be4f"/>
<path d="M154.25,678.5 H289 V691 H154.25 A6.25,6.25 0 0 1 154.25,678.5 Z" fill="#fff" stroke="#3c3c3c" stroke-width="1"/>
<rect x="161" y="680" width="95.5" height="10" fill="#ebebeb"/>
<rect x="256.5" y="679" width="32" height="12" fill="#ffff00"/>
<path d="M256.5,678.5 V691" stroke="#3c3c3c" stroke-width="1"/>
<g transform="translate(155.2,685) scale(0.95)"><circle r="2.8" fill="#000"/><rect x="-0.9" y="-3.6" width="1.8" height="7.2" rx="0.4" fill="#000" transform="rotate(0)"/><rect x="-0.9" y="-3.6" width="1.8" height="7.2" rx="0.4" fill="#000" transform="rotate(60)"/><rect x="-0.9" y="-3.6" width="1.8" height="7.2" rx="0.4" fill="#000" transform="rotate(120)"/><circle r="1.3" fill="#fff"/></g>
<text x="168.5" y="687.3" font-size="8" fill="#333">BWM EG Büro</text>
<text x="272.75" y="688.9" font-size="10.5" fill="#333" font-weight="bold" text-anchor="middle">Mv</text>
<path d="M288.5,681 H292 Q293.5,681 294.5,683.5 L295.3,685 L294.5,686.5 Q293.5,689 292,689 H288.5 Z" fill="#69be4f"/>
<path d="M154.25,690.5 H289 V703 H154.25 A6.25,6.25 0 0 1 154.25,690.5 Z" fill="#fff" stroke="#3c3c3c" stroke-width="1"/>
<rect x="161" y="692" width="95.5" height="10" fill="#ebebeb"/>
<rect x="256.5" y="691" width="32" height="12" fill="#fff"/>
<path d="M256.5,690.5 V703" stroke="#3c3c3c" stroke-width="1"/>
<g transform="translate(155.2,697) scale(0.95)"><circle r="2.8" fill="#000"/><rect x="-0.9" y="-3.6" width="1.8" height="7.2" rx="0.4" fill="#000" transform="rotate(0)"/><rect x="-0.9" y="-3.6" width="1.8" height="7.2" rx="0.4" fill="#000" transform="rotate(60)"/><rect x="-0.9" y="-3.6" width="1.8" height="7.2" rx="0.4" fill="#000" transform="rotate(120)"/><circle r="1.3" fill="#fff"/></g>
<text x="168.5" y="699.3" font-size="8" fill="#333">BWM EG VR (Kl...</text>
<text x="272.75" y="700.9" font-size="10.5" fill="#333" font-weight="bold" text-anchor="middle">Mv</text>
<path d="M288.5,693 H292 Q293.5,693 294.5,695.5 L295.3,697 L294.5,698.5 Q293.5,701 292,701 H288.5 Z" fill="#69be4f"/>
<path d="M154.25,703.5 H289 V716 H154.25 A6.25,6.25 0 0 1 154.25,703.5 Z" fill="#fff" stroke="#3c3c3c" stroke-width="1"/>
<rect x="161" y="705" width="95.5" height="10" fill="#ebebeb"/>
<rect x="256.5" y="704" width="32" height="12" fill="#fff"/>
<path d="M256.5,703.5 V716" stroke="#3c3c3c" stroke-width="1"/>
<g transform="translate(155.2,710) scale(0.95)"><circle r="2.8" fill="#000"/><rect x="-0.9" y="-3.6" width="1.8" height="7.2" rx="0.4" fill="#000" transform="rotate(0)"/><rect x="-0.9" y="-3.6" width="1.8" height="7.2" rx="0.4" fill="#000" transform="rotate(60)"/><rect x="-0.9" y="-3.6" width="1.8" height="7.2" rx="0.4" fill="#000" transform="rotate(120)"/><circle r="1.3" fill="#fff"/></g>
<text x="168.5" y="712.3" font-size="8" fill="#333">BWM EG Essz.</text>
<text x="272.75" y="713.9" font-size="10.5" fill="#333" font-weight="bold" text-anchor="middle">Mv</text>
<path d="M288.5,706 H292 Q293.5,706 294.5,708.5 L295.3,710 L294.5,711.5 Q293.5,714 292,714 H288.5 Z" fill="#69be4f"/>
<path d="M154.25,735.5 H289 V748 H154.25 A6.25,6.25 0 0 1 154.25,735.5 Z" fill="#fff" stroke="#3c3c3c" stroke-width="1"/>
<rect x="161" y="737" width="95.5" height="10" fill="#ebebeb"/>
<rect x="161" y="737" width="6" height="10" fill="#ffff00"/>
<rect x="256.5" y="736" width="32" height="12" fill="#ffff00"/>
<path d="M256.5,735.5 V748" stroke="#3c3c3c" stroke-width="1"/>
<g transform="translate(155.2,742) scale(0.95)"><circle r="2.8" fill="#000"/><rect x="-0.9" y="-3.6" width="1.8" height="7.2" rx="0.4" fill="#000" transform="rotate(0)"/><rect x="-0.9" y="-3.6" width="1.8" height="7.2" rx="0.4" fill="#000" transform="rotate(60)"/><rect x="-0.9" y="-3.6" width="1.8" height="7.2" rx="0.4" fill="#000" transform="rotate(120)"/><circle r="1.3" fill="#fff"/></g>
<text x="169.5" y="745.9" font-size="11" fill="#333" font-weight="bold">Pool Temp</text>
<text x="272.75" y="745.9" font-size="10.5" fill="#333" font-weight="bold" text-anchor="middle">M</text>
<path d="M288.5,738 H292 Q293.5,738 294.5,740.5 L295.3,742 L294.5,743.5 Q293.5,746 292,746 H288.5 Z" fill="#69be4f"/>
<path d="M83.75,818.5 H218.5 V831 H83.75 A6.25,6.25 0 0 1 83.75,818.5 Z" fill="#fff" stroke="#3c3c3c" stroke-width="1"/>
<rect x="90.5" y="820" width="96" height="10" fill="#ebebeb"/>
<rect x="186.5" y="819" width="31.5" height="12" fill="#fff"/>
<path d="M186.5,818.5 V831" stroke="#3c3c3c" stroke-width="1"/>
<g transform="translate(84.7,825) scale(1.0)"><rect x="-0.75" y="-2.9" width="1.5" height="1.4" fill="#000"/><rect x="-0.75" y="-0.7" width="1.5" height="3.9" fill="#000"/></g>
<text x="99" y="828.9" font-size="11" fill="#333" font-weight="bold">Q: Schalter</text>
<path d="M206,822 V820.5 H198 V829.5 H206 V828" fill="none" stroke="#333" stroke-width="1.3"/><path d="M202,825 H208" fill="none" stroke="#333" stroke-width="1.6"/>
<path d="M218,821 H221.5 Q223,821 224,823.5 L224.8,825 L224,826.5 Q223,829 221.5,829 H218 Z" fill="#d2d2cc"/>
<path d="M851.25,537.5 H986.5 V550 H851.25 A6.25,6.25 0 0 1 851.25,537.5 Z" fill="#fff" stroke="#3c3c3c" stroke-width="1"/>
<rect x="858" y="539" width="96" height="10" fill="#ebebeb"/>
<rect x="954" y="538" width="32" height="12" fill="#fff"/>
<path d="M954,537.5 V550" stroke="#3c3c3c" stroke-width="1"/>
<g transform="translate(852.2,544) scale(0.95)"><circle r="2.8" fill="#000"/><rect x="-0.9" y="-3.6" width="1.8" height="7.2" rx="0.4" fill="#000" transform="rotate(0)"/><rect x="-0.9" y="-3.6" width="1.8" height="7.2" rx="0.4" fill="#000" transform="rotate(60)"/><rect x="-0.9" y="-3.6" width="1.8" height="7.2" rx="0.4" fill="#000" transform="rotate(120)"/><circle r="1.3" fill="#fff"/></g>
<text x="866.5" y="547.9" font-size="11" fill="#333" font-weight="bold">Tagesimpuls</text>
<text x="970.25" y="547.9" font-size="10.5" fill="#333" font-weight="bold" text-anchor="middle">T</text>
<path d="M986,540 H989.5 Q991,540 992,542.5 L992.8,544 L992,545.5 Q991,548 989.5,548 H986 Z" fill="#69be4f"/>
<path d="M659.75,665.5 H794.5 V678 H659.75 A6.25,6.25 0 0 1 659.75,665.5 Z" fill="#fff" stroke="#3c3c3c" stroke-width="1"/>
<rect x="666.5" y="667" width="96" height="10" fill="#ebebeb"/>
<rect x="762.5" y="666" width="31.5" height="12" fill="#fff"/>
<path d="M762.5,665.5 V678" stroke="#3c3c3c" stroke-width="1"/>
<g transform="translate(660.7,672) scale(0.95)"><circle r="2.8" fill="#000"/><rect x="-0.9" y="-3.6" width="1.8" height="7.2" rx="0.4" fill="#000" transform="rotate(0)"/><rect x="-0.9" y="-3.6" width="1.8" height="7.2" rx="0.4" fill="#000" transform="rotate(60)"/><rect x="-0.9" y="-3.6" width="1.8" height="7.2" rx="0.4" fill="#000" transform="rotate(120)"/><circle r="1.3" fill="#fff"/></g>
<text x="675" y="675.9" font-size="11" fill="#333" font-weight="bold">HTür Wippe 5</text>
<text x="778.5" y="675.9" font-size="10.5" fill="#333" font-weight="bold" text-anchor="middle">M</text>
<path d="M794,668 H797.5 Q799,668 800,670.5 L800.8,672 L800,673.5 Q799,676 797.5,676 H794 Z" fill="#69be4f"/>
<path d="M659.75,678.5 H794.5 V691 H659.75 A6.25,6.25 0 0 1 659.75,678.5 Z" fill="#fff" stroke="#3c3c3c" stroke-width="1"/>
<rect x="666.5" y="680" width="96" height="10" fill="#ebebeb"/>
<rect x="762.5" y="679" width="31.5" height="12" fill="#fff"/>
<path d="M762.5,678.5 V691" stroke="#3c3c3c" stroke-width="1"/>
<g transform="translate(660.7,685) scale(0.95)"><circle r="2.8" fill="#000"/><rect x="-0.9" y="-3.6" width="1.8" height="7.2" rx="0.4" fill="#000" transform="rotate(0)"/><rect x="-0.9" y="-3.6" width="1.8" height="7.2" rx="0.4" fill="#000" transform="rotate(60)"/><rect x="-0.9" y="-3.6" width="1.8" height="7.2" rx="0.4" fill="#000" transform="rotate(120)"/><circle r="1.3" fill="#fff"/></g>
<text x="675" y="688.9" font-size="11" fill="#333" font-weight="bold">NT Wippe 1</text>
<text x="778.5" y="688.9" font-size="10.5" fill="#333" font-weight="bold" text-anchor="middle">M</text>
<path d="M794,681 H797.5 Q799,681 800,683.5 L800.8,685 L800,686.5 Q799,689 797.5,689 H794 Z" fill="#69be4f"/>
<path d="M1292,46.5 H1299.5 V54.5 H1292 L1294.7,50.5 Z" fill="#f6b455"/>
<path d="M1299,44.5 H1434 A6.5,6.5 0 0 1 1434,57.5 H1299 Z" fill="#fff" stroke="#3c3c3c" stroke-width="1"/>
<rect x="1299.5" y="45" width="32" height="12" fill="#ffff00"/>
<rect x="1332.5" y="46" width="95.5" height="10" fill="#ebebeb"/>
<path d="M1331.5,44.5 V57.5" stroke="#3c3c3c" stroke-width="1"/>
<text x="1315.25" y="54.9" font-size="10.5" fill="#333" font-weight="bold" text-anchor="middle">VQ</text>
<text x="1352" y="54.9" font-size="11" fill="#333" font-weight="bold">TTS Regen</text>
<g transform="translate(1434.5,51) scale(0.95)"><circle r="2.8" fill="#000"/><rect x="-0.9" y="-3.6" width="1.8" height="7.2" rx="0.4" fill="#000" transform="rotate(0)"/><rect x="-0.9" y="-3.6" width="1.8" height="7.2" rx="0.4" fill="#000" transform="rotate(60)"/><rect x="-0.9" y="-3.6" width="1.8" height="7.2" rx="0.4" fill="#000" transform="rotate(120)"/><circle r="1.3" fill="#fff"/></g>
<path d="M1305,526.5 H1312.5 V534.5 H1305 L1307.7,530.5 Z" fill="#d2d2cc"/>
<path d="M1312,524.5 H1447 A6.5,6.5 0 0 1 1447,537.5 H1312 Z" fill="#fff" stroke="#3c3c3c" stroke-width="1"/>
<rect x="1312.5" y="525" width="32" height="12" fill="#fff"/>
<rect x="1345.5" y="526" width="95.5" height="10" fill="#ebebeb"/>
<path d="M1344.5,524.5 V537.5" stroke="#3c3c3c" stroke-width="1"/>
<path d="M1324.75,528 V526.5 H1332.75 V535.5 H1324.75 V534" fill="none" stroke="#333" stroke-width="1.3"/><path d="M1322.25,531 H1329.25" fill="none" stroke="#333" stroke-width="1.6"/>
<text x="1352.5" y="534.9" font-size="11" fill="#333" font-weight="bold">R: Schaltuhr</text>
<g transform="translate(1447.5,531) scale(1.0)"><rect x="-0.75" y="-2.9" width="1.5" height="1.4" fill="#000"/><rect x="-0.75" y="-0.7" width="1.5" height="3.9" fill="#000"/></g>
</svg>
<div id="shadow"></div>
<svg width="1516" height="894" style="position:absolute;left:0;top:0" font-family="Liberation Sans, sans-serif">
<rect x="531" y="712" width="1000" height="200" fill="#f0f0f0"/>
<rect x="532" y="713" width="1000" height="30" fill="#fff"/>
<path d="M531.5,900 V712.5 H1520" fill="none" stroke="#707070" stroke-width="1"/>
<path d="M540,719 H551 L556,727 V735 H540 Z" fill="#62c446"/>
<path d="M551,719 L553.5,719 L556,723 Z" fill="#d8d8d8"/>
<circle cx="543.5" cy="722.5" r="1.2" fill="none" stroke="#fff" stroke-width="0.8"/>
<text x="548" y="734" font-size="3.2" fill="#d8f5cc" text-anchor="middle">CONFIG</text>
<text x="561" y="732" font-size="11.6" fill="#000">Status bearbeiten</text>
<rect x="543" y="754" width="1000" height="200" fill="#fff"/>
<path d="M543.5,900 V754.5 H1520" fill="none" stroke="#828790" stroke-width="1"/>
<path d="M580.5,755 V779" stroke="#e5e5e5" stroke-width="1"/>
<path d="M580.5,780 V900" stroke="#eef2f8" stroke-width="1"/>
<path d="M616.5,755 V779" stroke="#e5e5e5" stroke-width="1"/>
<path d="M616.5,780 V900" stroke="#eef2f8" stroke-width="1"/>
<path d="M670.5,755 V779" stroke="#e5e5e5" stroke-width="1"/>
<path d="M670.5,780 V900" stroke="#eef2f8" stroke-width="1"/>
<path d="M706.5,755 V779" stroke="#e5e5e5" stroke-width="1"/>
<path d="M706.5,780 V900" stroke="#eef2f8" stroke-width="1"/>
<path d="M742.5,755 V779" stroke="#e5e5e5" stroke-width="1"/>
<path d="M742.5,780 V900" stroke="#eef2f8" stroke-width="1"/>
<path d="M796.5,755 V779" stroke="#e5e5e5" stroke-width="1"/>
<path d="M796.5,780 V900" stroke="#eef2f8" stroke-width="1"/>
<path d="M832.5,755 V779" stroke="#e5e5e5" stroke-width="1"/>
<path d="M832.5,780 V900" stroke="#eef2f8" stroke-width="1"/>
<path d="M868.5,755 V779" stroke="#e5e5e5" stroke-width="1"/>
<path d="M868.5,780 V900" stroke="#eef2f8" stroke-width="1"/>
<path d="M922.5,755 V779" stroke="#e5e5e5" stroke-width="1"/>
<path d="M922.5,780 V900" stroke="#eef2f8" stroke-width="1"/>
<path d="M958.5,755 V779" stroke="#e5e5e5" stroke-width="1"/>
<path d="M958.5,780 V900" stroke="#eef2f8" stroke-width="1"/>
<path d="M995,755 V779" stroke="#e5e5e5" stroke-width="1"/>
<path d="M995,780 V900" stroke="#eef2f8" stroke-width="1"/>
<path d="M1048.5,755 V779" stroke="#e5e5e5" stroke-width="1"/>
<path d="M1048.5,780 V900" stroke="#eef2f8" stroke-width="1"/>
<path d="M1174.5,755 V779" stroke="#e5e5e5" stroke-width="1"/>
<path d="M1174.5,780 V900" stroke="#eef2f8" stroke-width="1"/>
<path d="M544,799.5 H1516" stroke="#f0f0f0" stroke-width="1"/>
<path d="M544,819.5 H1516" stroke="#f0f0f0" stroke-width="1"/>
<path d="M544,839.5 H1516" stroke="#f0f0f0" stroke-width="1"/>
<path d="M544,859.5 H1516" stroke="#f0f0f0" stroke-width="1"/>
<path d="M544,879.5 H1516" stroke="#f0f0f0" stroke-width="1"/>
<text x="549.5" y="771.5" font-size="11" fill="#000"><tspan font-family="Liberation Serif" font-size="11.5">I</tspan></text>
<text x="586.5" y="771.5" font-size="11" fill="#000">V1</text>
<text x="622.5" y="771.5" font-size="11" fill="#000">Wert</text>
<text x="676.5" y="771.5" font-size="11" fill="#000"><tspan font-family="Liberation Serif" font-size="11.5">I</tspan></text>
<text x="712.5" y="771.5" font-size="11" fill="#000">V2</text>
<text x="748.5" y="771.5" font-size="11" fill="#000">Wert</text>
<text x="802.5" y="771.5" font-size="11" fill="#000"><tspan font-family="Liberation Serif" font-size="11.5">I</tspan></text>
<text x="838.5" y="771.5" font-size="11" fill="#000">V3</text>
<text x="874.5" y="771.5" font-size="11" fill="#000">Wert</text>
<text x="928.5" y="771.5" font-size="11" fill="#000"><tspan font-family="Liberation Serif" font-size="11.5">I</tspan></text>
<text x="964.5" y="771.5" font-size="11" fill="#000">V4</text>
<text x="1001" y="771.5" font-size="11" fill="#000">Wert</text>
<text x="1054.5" y="771.5" font-size="11" fill="#000">Symbol</text>
<text x="1180.5" y="771.5" font-size="11" fill="#000">Statustext</text>
<text x="549.5" y="793.5" font-size="11" fill="#000">A<tspan font-family="Liberation Serif" font-size="11.5">I</tspan>1</text>
<text x="586.5" y="793.5" font-size="11" fill="#000">==</text>
<text x="622.5" y="793.5" font-size="11" fill="#000">1</text>
<text x="677.5" y="793.5" font-size="11" fill="#000">-</text>
<text x="712.5" y="793.5" font-size="11" fill="#000">==</text>
<text x="748.5" y="793.5" font-size="11" fill="#000">0</text>
<text x="803.5" y="793.5" font-size="11" fill="#000">-</text>
<text x="838.5" y="793.5" font-size="11" fill="#000">==</text>
<text x="874.5" y="793.5" font-size="11" fill="#000">0</text>
<text x="929.5" y="793.5" font-size="11" fill="#000">-</text>
<text x="964.5" y="793.5" font-size="11" fill="#000">==</text>
<text x="1001" y="793.5" font-size="11" fill="#000">0</text>
<text x="1072" y="793.5" font-size="11" fill="#000">Nicht zugeordnet</text>
<text x="1180.5" y="793.5" font-size="11" fill="#000">Aktuelle Wetterwarnung! In den nächsten 2 Stunden wird es regnen!</text>
<text x="549.5" y="813.5" font-size="11" fill="#000">A<tspan font-family="Liberation Serif" font-size="11.5">I</tspan>2</text>
<text x="586.5" y="813.5" font-size="11" fill="#000">==</text>
<text x="622.5" y="813.5" font-size="11" fill="#000">1</text>
<text x="677.5" y="813.5" font-size="11" fill="#000">-</text>
<text x="712.5" y="813.5" font-size="11" fill="#000">==</text>
<text x="748.5" y="813.5" font-size="11" fill="#000">0</text>
<text x="803.5" y="813.5" font-size="11" fill="#000">-</text>
<text x="838.5" y="813.5" font-size="11" fill="#000">==</text>
<text x="874.5" y="813.5" font-size="11" fill="#000">0</text>
<text x="929.5" y="813.5" font-size="11" fill="#000">-</text>
<text x="964.5" y="813.5" font-size="11" fill="#000">==</text>
<text x="1001" y="813.5" font-size="11" fill="#000">0</text>
<text x="1072" y="813.5" font-size="11" fill="#000">Nicht zugeordnet</text>
<text x="1180.5" y="813.5" font-size="11" fill="#000">Aktuelle Wetterwarnung! In den nächsten 4 Stunden wird es regnen!</text>
<text x="549.5" y="833.5" font-size="11" fill="#000">A<tspan font-family="Liberation Serif" font-size="11.5">I</tspan>3</text>
<text x="586.5" y="833.5" font-size="11" fill="#000">==</text>
<text x="622.5" y="833.5" font-size="11" fill="#000">1</text>
<text x="677.5" y="833.5" font-size="11" fill="#000">-</text>
<text x="712.5" y="833.5" font-size="11" fill="#000">==</text>
<text x="748.5" y="833.5" font-size="11" fill="#000">0</text>
<text x="803.5" y="833.5" font-size="11" fill="#000">-</text>
<text x="838.5" y="833.5" font-size="11" fill="#000">==</text>
<text x="874.5" y="833.5" font-size="11" fill="#000">0</text>
<text x="929.5" y="833.5" font-size="11" fill="#000">-</text>
<text x="964.5" y="833.5" font-size="11" fill="#000">==</text>
<text x="1001" y="833.5" font-size="11" fill="#000">0</text>
<text x="1072" y="833.5" font-size="11" fill="#000">Nicht zugeordnet</text>
<text x="1180.5" y="833.5" font-size="11" fill="#000">Aktuelle Wetterwarnung! In den nächsten 6 Stunden wird es regnen!</text>
<text x="549.5" y="853.5" font-size="11" fill="#000">A<tspan font-family="Liberation Serif" font-size="11.5">I</tspan>4</text>
<text x="586.5" y="853.5" font-size="11" fill="#000">==</text>
<text x="622.5" y="853.5" font-size="11" fill="#000">1</text>
<text x="677.5" y="853.5" font-size="11" fill="#000">-</text>
<text x="712.5" y="853.5" font-size="11" fill="#000">==</text>
<text x="748.5" y="853.5" font-size="11" fill="#000">0</text>
<text x="803.5" y="853.5" font-size="11" fill="#000">-</text>
<text x="838.5" y="853.5" font-size="11" fill="#000">==</text>
<text x="874.5" y="853.5" font-size="11" fill="#000">0</text>
<text x="929.5" y="853.5" font-size="11" fill="#000">-</text>
<text x="964.5" y="853.5" font-size="11" fill="#000">==</text>
<text x="1001" y="853.5" font-size="11" fill="#000">0</text>
<text x="1072" y="853.5" font-size="11" fill="#000">Nicht zugeordnet</text>
<text x="1180.5" y="853.5" font-size="11" fill="#000">Aktuelle Wetterwarnung! In den nächsten 8 Stunden wird es regnen!</text>
<text x="550.5" y="873.5" font-size="11" fill="#000">-</text>
<text x="586.5" y="873.5" font-size="11" fill="#000">==</text>
<text x="622.5" y="873.5" font-size="11" fill="#000">0</text>
<text x="677.5" y="873.5" font-size="11" fill="#000">-</text>
<text x="712.5" y="873.5" font-size="11" fill="#000">==</text>
<text x="748.5" y="873.5" font-size="11" fill="#000">0</text>
<text x="803.5" y="873.5" font-size="11" fill="#000">-</text>
<text x="838.5" y="873.5" font-size="11" fill="#000">==</text>
<text x="874.5" y="873.5" font-size="11" fill="#000">0</text>
<text x="929.5" y="873.5" font-size="11" fill="#000">-</text>
<text x="964.5" y="873.5" font-size="11" fill="#000">==</text>
<text x="1001" y="873.5" font-size="11" fill="#000">0</text>
<text x="1072" y="873.5" font-size="11" fill="#000">Nicht zugeordnet</text>
</svg>
</body></html>
